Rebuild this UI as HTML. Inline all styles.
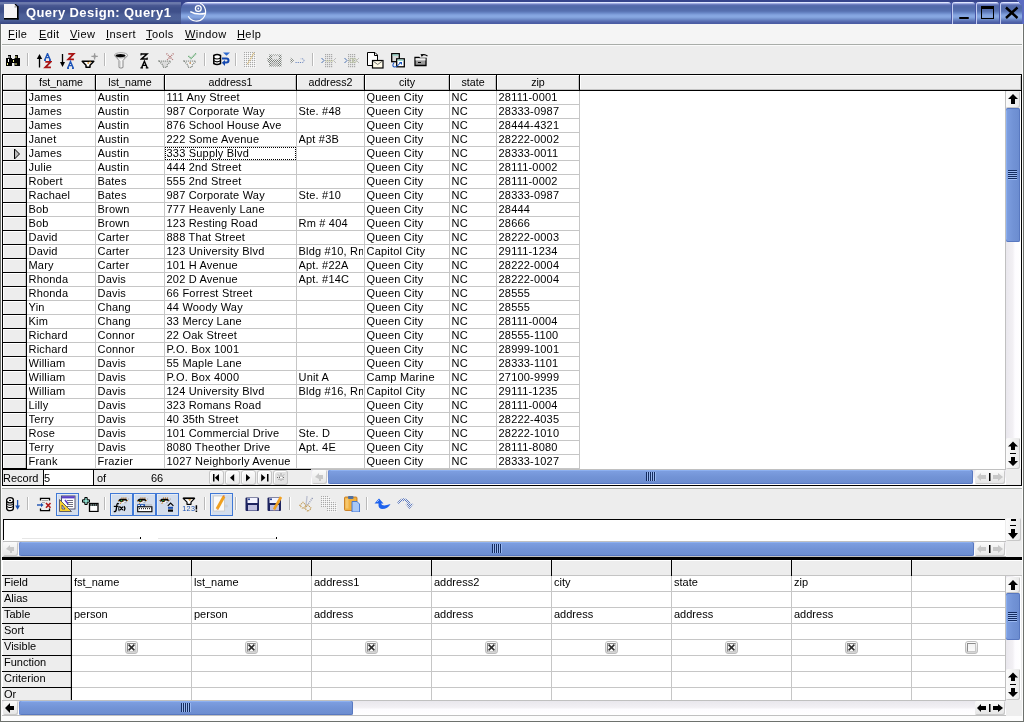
<!DOCTYPE html>
<html><head><meta charset="utf-8"><style>
html,body{margin:0;padding:0;width:1024px;height:722px;overflow:hidden;background:#ededed}
#c{position:relative;width:1024px;height:722px;overflow:hidden;will-change:transform;font-family:"Liberation Sans",sans-serif;color:#000}
#c div{position:absolute;box-sizing:border-box}
#c span{position:absolute;white-space:pre;font-family:"Liberation Sans",sans-serif;font-size:11px;line-height:13px}
u{text-decoration:underline;text-underline-offset:1px}
</style></head><body><div id="c">
<div style="left:0px;top:0px;width:1024px;height:722px;background:#ededed"></div>
<div style="left:0px;top:0px;width:1px;height:722px;background:#6d716d"></div>
<div style="left:1023px;top:0px;width:1px;height:722px;background:#6d716d"></div>
<div style="left:0px;top:721px;width:1024px;height:1px;background:#6d716d"></div>
<div style="left:1px;top:716px;width:1022px;height:5px;background:#fcfcfc"></div>
<div style="left:1px;top:24px;width:1px;height:697px;background:#fbfbfb"></div>
<div style="left:1022px;top:24px;width:1px;height:697px;background:#fbfbfb"></div>
<div style="left:0px;top:0px;width:1024px;height:24px;background:#36448c"></div>
<div style="left:0px;top:2px;width:181px;height:22px;background:linear-gradient(#6a78aa 0px,#6a78aa 2px,#4c5b94 3px,#3f508a 6px,#3f508a 10px,#4d6098 13px,#4e6299 18px,#3c4c88 21px,#34447e 22px)"></div>
<div style="left:181px;top:2px;width:770px;height:22px;border-top-left-radius:7px;border-top-right-radius:3px;background:linear-gradient(#dfe6ff 0px,#dfe6ff 1px,#a2aee3 1px,#a2aee3 2px,#6e7ebf 2px,#6e7ebf 3px,#5a6db0 3px,#5068a8 5px,#5670b0 9px,#6a88c8 11px,#84a4df 13px,#88a8e2 15px,#7290cc 17px,#5a70b4 19px,#4a5ca4 21px,#4a5ca4 22px)"></div>
<div style="left:951px;top:2px;width:1px;height:22px;background:#4656a6"></div>
<div style="left:975px;top:2px;width:1px;height:22px;background:#4656a6"></div>
<div style="left:999px;top:2px;width:1px;height:22px;background:#4656a6"></div>
<div style="left:1022px;top:0px;width:2px;height:24px;background:#5b6cc2"></div>
<div style="left:952px;top:2px;width:23px;height:22px;border-top-left-radius:3px;border-top-right-radius:3px;background:linear-gradient(#dfe6ff 0px,#dfe6ff 1px,#a2aee3 1px,#a2aee3 2px,#6e7ebf 2px,#6e7ebf 3px,#5a6db0 3px,#5068a8 5px,#5670b0 9px,#6a88c8 11px,#84a4df 13px,#88a8e2 15px,#7290cc 17px,#5a70b4 19px,#4a5ca4 21px,#4a5ca4 22px);box-shadow:inset 1px 0 0 #c4cdf2"></div>
<div style="left:976px;top:2px;width:23px;height:22px;border-top-left-radius:3px;border-top-right-radius:3px;background:linear-gradient(#dfe6ff 0px,#dfe6ff 1px,#a2aee3 1px,#a2aee3 2px,#6e7ebf 2px,#6e7ebf 3px,#5a6db0 3px,#5068a8 5px,#5670b0 9px,#6a88c8 11px,#84a4df 13px,#88a8e2 15px,#7290cc 17px,#5a70b4 19px,#4a5ca4 21px,#4a5ca4 22px);box-shadow:inset 1px 0 0 #c4cdf2"></div>
<div style="left:1000px;top:2px;width:22px;height:22px;border-top-left-radius:3px;border-top-right-radius:3px;background:linear-gradient(#dfe6ff 0px,#dfe6ff 1px,#a2aee3 1px,#a2aee3 2px,#6e7ebf 2px,#6e7ebf 3px,#5a6db0 3px,#5068a8 5px,#5670b0 9px,#6a88c8 11px,#84a4df 13px,#88a8e2 15px,#7290cc 17px,#5a70b4 19px,#4a5ca4 21px,#4a5ca4 22px);box-shadow:inset 1px 0 0 #c4cdf2"></div>
<div style="left:1017px;top:0px;width:7px;height:7px;background:linear-gradient(45deg,transparent 50%,#5b6cc2 50%)"></div>
<div style="left:959px;top:17px;width:10px;height:2px;background:#000;border-radius:1px"></div>
<div style="left:981px;top:6px;width:13px;height:13px;border:1px solid #000;border-top:3px solid #000"></div>
<svg style="position:absolute;left:1003px;top:5px;" width="18" height="15" viewBox="0 0 18 15"><path d="M3 2.5 L14.5 13 M14.5 2.5 L3 13" stroke="#000" stroke-width="2.4"/></svg>
<svg style="position:absolute;left:4px;top:4px;" width="16" height="16" viewBox="0 0 16 16"><path d="M0 0 H11 L13 2 V14 H0 Z" fill="#f6f4f6"/><path d="M11 0 L13.6 2.6" stroke="#000" stroke-width="1.3"/><rect x="13" y="2" width="1.6" height="13.6" fill="#000"/><rect x="0" y="14" width="14.6" height="1.6" fill="#000"/><rect x="10.5" y="2.4" width="2.2" height="1" fill="#7a7a7a"/></svg>
<span style="left:26px;top:5px;font-weight:bold;font-size:13px;letter-spacing:0.4px;color:#fff;line-height:16px">Query Design: Query1</span>
<svg style="position:absolute;left:182px;top:0px;" width="32" height="24" viewBox="0 0 32 24"><circle cx="16.3" cy="8.5" r="2.9" fill="none" stroke="#fff" stroke-width="1.3"/><circle cx="16.3" cy="8.5" r="0.9" fill="#fff"/><path d="M8.3 11.6 Q15 15.5 24 13.2" fill="none" stroke="#fff" stroke-width="1.5"/><path d="M18.2 3.3 A9.3 9.3 0 1 1 6.2 16.3" fill="none" stroke="#fff" stroke-width="1.2"/></svg>
<div style="left:1px;top:24px;width:1022px;height:20px;background:#f5f5f5"></div>
<div style="left:1px;top:24px;width:1px;height:20px;background:#fbfbfb"></div>
<div style="left:2px;top:44px;width:1021px;height:1px;background:#a9ada9"></div>
<div style="left:2px;top:45px;width:1021px;height:1px;background:#fbfbfb"></div>
<span style="left:8px;top:27px;font-size:11px;line-height:15px;letter-spacing:0.4px;color:#000"><u>F</u>ile</span>
<span style="left:39px;top:27px;font-size:11px;line-height:15px;letter-spacing:0.4px;color:#000"><u>E</u>dit</span>
<span style="left:70px;top:27px;font-size:11px;line-height:15px;letter-spacing:0.4px;color:#000"><u>V</u>iew</span>
<span style="left:106px;top:27px;font-size:11px;line-height:15px;letter-spacing:0.4px;color:#000"><u>I</u>nsert</span>
<span style="left:146px;top:27px;font-size:11px;line-height:15px;letter-spacing:0.4px;color:#000"><u>T</u>ools</span>
<span style="left:185px;top:27px;font-size:11px;line-height:15px;letter-spacing:0.4px;color:#000"><u>W</u>indow</span>
<span style="left:237px;top:27px;font-size:11px;line-height:15px;letter-spacing:0.4px;color:#000"><u>H</u>elp</span>
<div style="left:27px;top:53px;width:1px;height:13px;background:#b9b9b9"></div>
<div style="left:104px;top:53px;width:1px;height:13px;background:#b9b9b9"></div>
<div style="left:204px;top:53px;width:1px;height:13px;background:#b9b9b9"></div>
<div style="left:235px;top:53px;width:1px;height:13px;background:#b9b9b9"></div>
<div style="left:312px;top:53px;width:1px;height:13px;background:#b9b9b9"></div>
<div style="left:2px;top:74px;width:1020px;height:412px;background:#fff"></div>
<div style="left:2px;top:74px;width:1020px;height:17px;background:#ededed"></div>
<div style="left:2px;top:74px;width:1020px;height:1px;background:#000"></div>
<div style="left:2px;top:90px;width:1020px;height:1px;background:#000"></div>
<div style="left:2px;top:74px;width:1px;height:17px;background:#000"></div>
<div style="left:3px;top:75px;width:23px;height:1px;background:#fff"></div>
<div style="left:3px;top:75px;width:1px;height:14px;background:#fff"></div>
<div style="left:3px;top:89px;width:23px;height:1px;background:#c4c4c4"></div>
<div style="left:25px;top:76px;width:1px;height:14px;background:#c4c4c4"></div>
<div style="left:26px;top:74px;width:1px;height:17px;background:#000"></div>
<div style="left:27px;top:75px;width:68px;height:1px;background:#fff"></div>
<div style="left:27px;top:75px;width:1px;height:14px;background:#fff"></div>
<div style="left:27px;top:89px;width:68px;height:1px;background:#c4c4c4"></div>
<div style="left:94px;top:76px;width:1px;height:14px;background:#c4c4c4"></div>
<div style="left:95px;top:74px;width:1px;height:17px;background:#000"></div>
<div style="left:96px;top:75px;width:68px;height:1px;background:#fff"></div>
<div style="left:96px;top:75px;width:1px;height:14px;background:#fff"></div>
<div style="left:96px;top:89px;width:68px;height:1px;background:#c4c4c4"></div>
<div style="left:163px;top:76px;width:1px;height:14px;background:#c4c4c4"></div>
<div style="left:164px;top:74px;width:1px;height:17px;background:#000"></div>
<div style="left:165px;top:75px;width:131px;height:1px;background:#fff"></div>
<div style="left:165px;top:75px;width:1px;height:14px;background:#fff"></div>
<div style="left:165px;top:89px;width:131px;height:1px;background:#c4c4c4"></div>
<div style="left:295px;top:76px;width:1px;height:14px;background:#c4c4c4"></div>
<div style="left:296px;top:74px;width:1px;height:17px;background:#000"></div>
<div style="left:297px;top:75px;width:67px;height:1px;background:#fff"></div>
<div style="left:297px;top:75px;width:1px;height:14px;background:#fff"></div>
<div style="left:297px;top:89px;width:67px;height:1px;background:#c4c4c4"></div>
<div style="left:363px;top:76px;width:1px;height:14px;background:#c4c4c4"></div>
<div style="left:364px;top:74px;width:1px;height:17px;background:#000"></div>
<div style="left:365px;top:75px;width:84px;height:1px;background:#fff"></div>
<div style="left:365px;top:75px;width:1px;height:14px;background:#fff"></div>
<div style="left:365px;top:89px;width:84px;height:1px;background:#c4c4c4"></div>
<div style="left:448px;top:76px;width:1px;height:14px;background:#c4c4c4"></div>
<div style="left:449px;top:74px;width:1px;height:17px;background:#000"></div>
<div style="left:450px;top:75px;width:46px;height:1px;background:#fff"></div>
<div style="left:450px;top:75px;width:1px;height:14px;background:#fff"></div>
<div style="left:450px;top:89px;width:46px;height:1px;background:#c4c4c4"></div>
<div style="left:495px;top:76px;width:1px;height:14px;background:#c4c4c4"></div>
<div style="left:496px;top:74px;width:1px;height:17px;background:#000"></div>
<div style="left:497px;top:75px;width:82px;height:1px;background:#fff"></div>
<div style="left:497px;top:75px;width:1px;height:14px;background:#fff"></div>
<div style="left:497px;top:89px;width:82px;height:1px;background:#c4c4c4"></div>
<div style="left:578px;top:76px;width:1px;height:14px;background:#c4c4c4"></div>
<div style="left:579px;top:74px;width:1px;height:17px;background:#000"></div>
<div style="left:580px;top:75px;width:441px;height:1px;background:#fff"></div>
<div style="left:580px;top:75px;width:1px;height:14px;background:#fff"></div>
<div style="left:580px;top:89px;width:441px;height:1px;background:#c4c4c4"></div>
<div style="left:1020px;top:76px;width:1px;height:14px;background:#c4c4c4"></div>
<div style="left:1021px;top:74px;width:1px;height:412px;background:#000"></div>
<div style="left:2px;top:74px;width:1px;height:412px;background:#000"></div>
<span style="left:27px;top:76px;width:68px;text-align:center;font-size:10.7px;line-height:13px">fst_name</span>
<span style="left:96px;top:76px;width:68px;text-align:center;font-size:10.7px;line-height:13px">lst_name</span>
<span style="left:165px;top:76px;width:131px;text-align:center;font-size:10.7px;line-height:13px">address1</span>
<span style="left:297px;top:76px;width:67px;text-align:center;font-size:10.7px;line-height:13px">address2</span>
<span style="left:365px;top:76px;width:84px;text-align:center;font-size:10.7px;line-height:13px">city</span>
<span style="left:450px;top:76px;width:46px;text-align:center;font-size:10.7px;line-height:13px">state</span>
<span style="left:497px;top:76px;width:82px;text-align:center;font-size:10.7px;line-height:13px">zip</span>
<div style="left:95px;top:91px;width:1px;height:378px;background:#c6c6c6"></div>
<div style="left:164px;top:91px;width:1px;height:378px;background:#c6c6c6"></div>
<div style="left:296px;top:91px;width:1px;height:378px;background:#c6c6c6"></div>
<div style="left:364px;top:91px;width:1px;height:378px;background:#c6c6c6"></div>
<div style="left:449px;top:91px;width:1px;height:378px;background:#c6c6c6"></div>
<div style="left:496px;top:91px;width:1px;height:378px;background:#c6c6c6"></div>
<div style="left:579px;top:91px;width:1px;height:378px;background:#c6c6c6"></div>
<div style="left:27px;top:104px;width:552px;height:1px;background:#c6c6c6"></div>
<div style="left:3px;top:91px;width:23px;height:13px;background:#ededed;border-top:1px solid #fff;border-left:1px solid #fff;border-right:1px solid #c4c4c4"></div>
<div style="left:2px;top:104px;width:25px;height:1px;background:#000"></div>
<span style="left:28.5px;top:91px;width:65.5px;overflow:hidden;font-size:11px;line-height:13px;letter-spacing:0.2px">James</span>
<span style="left:97.5px;top:91px;width:65.5px;overflow:hidden;font-size:11px;line-height:13px;letter-spacing:0.2px">Austin</span>
<span style="left:166.5px;top:91px;width:128.5px;overflow:hidden;font-size:11px;line-height:13px;letter-spacing:0.2px">111 Any Street</span>
<span style="left:366.5px;top:91px;width:81.5px;overflow:hidden;font-size:11px;line-height:13px;letter-spacing:0.2px">Queen City</span>
<span style="left:451.5px;top:91px;width:43.5px;overflow:hidden;font-size:11px;line-height:13px;letter-spacing:0.2px">NC</span>
<span style="left:498.5px;top:91px;width:79.5px;overflow:hidden;font-size:11px;line-height:13px;letter-spacing:0.2px">28111-0001</span>
<div style="left:27px;top:118px;width:552px;height:1px;background:#c6c6c6"></div>
<div style="left:3px;top:105px;width:23px;height:13px;background:#ededed;border-top:1px solid #fff;border-left:1px solid #fff;border-right:1px solid #c4c4c4"></div>
<div style="left:2px;top:118px;width:25px;height:1px;background:#000"></div>
<span style="left:28.5px;top:105px;width:65.5px;overflow:hidden;font-size:11px;line-height:13px;letter-spacing:0.2px">James</span>
<span style="left:97.5px;top:105px;width:65.5px;overflow:hidden;font-size:11px;line-height:13px;letter-spacing:0.2px">Austin</span>
<span style="left:166.5px;top:105px;width:128.5px;overflow:hidden;font-size:11px;line-height:13px;letter-spacing:0.2px">987 Corporate Way</span>
<span style="left:298.5px;top:105px;width:64.5px;overflow:hidden;font-size:11px;line-height:13px;letter-spacing:0.2px">Ste. #48</span>
<span style="left:366.5px;top:105px;width:81.5px;overflow:hidden;font-size:11px;line-height:13px;letter-spacing:0.2px">Queen City</span>
<span style="left:451.5px;top:105px;width:43.5px;overflow:hidden;font-size:11px;line-height:13px;letter-spacing:0.2px">NC</span>
<span style="left:498.5px;top:105px;width:79.5px;overflow:hidden;font-size:11px;line-height:13px;letter-spacing:0.2px">28333-0987</span>
<div style="left:27px;top:132px;width:552px;height:1px;background:#c6c6c6"></div>
<div style="left:3px;top:119px;width:23px;height:13px;background:#ededed;border-top:1px solid #fff;border-left:1px solid #fff;border-right:1px solid #c4c4c4"></div>
<div style="left:2px;top:132px;width:25px;height:1px;background:#000"></div>
<span style="left:28.5px;top:119px;width:65.5px;overflow:hidden;font-size:11px;line-height:13px;letter-spacing:0.2px">James</span>
<span style="left:97.5px;top:119px;width:65.5px;overflow:hidden;font-size:11px;line-height:13px;letter-spacing:0.2px">Austin</span>
<span style="left:166.5px;top:119px;width:128.5px;overflow:hidden;font-size:11px;line-height:13px;letter-spacing:0.2px">876 School House Ave</span>
<span style="left:366.5px;top:119px;width:81.5px;overflow:hidden;font-size:11px;line-height:13px;letter-spacing:0.2px">Queen City</span>
<span style="left:451.5px;top:119px;width:43.5px;overflow:hidden;font-size:11px;line-height:13px;letter-spacing:0.2px">NC</span>
<span style="left:498.5px;top:119px;width:79.5px;overflow:hidden;font-size:11px;line-height:13px;letter-spacing:0.2px">28444-4321</span>
<div style="left:27px;top:146px;width:552px;height:1px;background:#c6c6c6"></div>
<div style="left:3px;top:133px;width:23px;height:13px;background:#ededed;border-top:1px solid #fff;border-left:1px solid #fff;border-right:1px solid #c4c4c4"></div>
<div style="left:2px;top:146px;width:25px;height:1px;background:#000"></div>
<span style="left:28.5px;top:133px;width:65.5px;overflow:hidden;font-size:11px;line-height:13px;letter-spacing:0.2px">Janet</span>
<span style="left:97.5px;top:133px;width:65.5px;overflow:hidden;font-size:11px;line-height:13px;letter-spacing:0.2px">Austin</span>
<span style="left:166.5px;top:133px;width:128.5px;overflow:hidden;font-size:11px;line-height:13px;letter-spacing:0.2px">222 Some Avenue</span>
<span style="left:298.5px;top:133px;width:64.5px;overflow:hidden;font-size:11px;line-height:13px;letter-spacing:0.2px">Apt #3B</span>
<span style="left:366.5px;top:133px;width:81.5px;overflow:hidden;font-size:11px;line-height:13px;letter-spacing:0.2px">Queen City</span>
<span style="left:451.5px;top:133px;width:43.5px;overflow:hidden;font-size:11px;line-height:13px;letter-spacing:0.2px">NC</span>
<span style="left:498.5px;top:133px;width:79.5px;overflow:hidden;font-size:11px;line-height:13px;letter-spacing:0.2px">28222-0002</span>
<div style="left:27px;top:160px;width:552px;height:1px;background:#c6c6c6"></div>
<div style="left:3px;top:147px;width:23px;height:13px;background:#ededed;border-top:1px solid #fff;border-left:1px solid #fff;border-right:1px solid #c4c4c4"></div>
<div style="left:2px;top:160px;width:25px;height:1px;background:#000"></div>
<span style="left:28.5px;top:147px;width:65.5px;overflow:hidden;font-size:11px;line-height:13px;letter-spacing:0.2px">James</span>
<span style="left:97.5px;top:147px;width:65.5px;overflow:hidden;font-size:11px;line-height:13px;letter-spacing:0.2px">Austin</span>
<span style="left:166.5px;top:147px;width:128.5px;overflow:hidden;font-size:11px;line-height:13px;letter-spacing:0.2px">333 Supply Blvd</span>
<span style="left:366.5px;top:147px;width:81.5px;overflow:hidden;font-size:11px;line-height:13px;letter-spacing:0.2px">Queen City</span>
<span style="left:451.5px;top:147px;width:43.5px;overflow:hidden;font-size:11px;line-height:13px;letter-spacing:0.2px">NC</span>
<span style="left:498.5px;top:147px;width:79.5px;overflow:hidden;font-size:11px;line-height:13px;letter-spacing:0.2px">28333-0011</span>
<div style="left:27px;top:174px;width:552px;height:1px;background:#c6c6c6"></div>
<div style="left:3px;top:161px;width:23px;height:13px;background:#ededed;border-top:1px solid #fff;border-left:1px solid #fff;border-right:1px solid #c4c4c4"></div>
<div style="left:2px;top:174px;width:25px;height:1px;background:#000"></div>
<span style="left:28.5px;top:161px;width:65.5px;overflow:hidden;font-size:11px;line-height:13px;letter-spacing:0.2px">Julie</span>
<span style="left:97.5px;top:161px;width:65.5px;overflow:hidden;font-size:11px;line-height:13px;letter-spacing:0.2px">Austin</span>
<span style="left:166.5px;top:161px;width:128.5px;overflow:hidden;font-size:11px;line-height:13px;letter-spacing:0.2px">444 2nd Street</span>
<span style="left:366.5px;top:161px;width:81.5px;overflow:hidden;font-size:11px;line-height:13px;letter-spacing:0.2px">Queen City</span>
<span style="left:451.5px;top:161px;width:43.5px;overflow:hidden;font-size:11px;line-height:13px;letter-spacing:0.2px">NC</span>
<span style="left:498.5px;top:161px;width:79.5px;overflow:hidden;font-size:11px;line-height:13px;letter-spacing:0.2px">28111-0002</span>
<div style="left:27px;top:188px;width:552px;height:1px;background:#c6c6c6"></div>
<div style="left:3px;top:175px;width:23px;height:13px;background:#ededed;border-top:1px solid #fff;border-left:1px solid #fff;border-right:1px solid #c4c4c4"></div>
<div style="left:2px;top:188px;width:25px;height:1px;background:#000"></div>
<span style="left:28.5px;top:175px;width:65.5px;overflow:hidden;font-size:11px;line-height:13px;letter-spacing:0.2px">Robert</span>
<span style="left:97.5px;top:175px;width:65.5px;overflow:hidden;font-size:11px;line-height:13px;letter-spacing:0.2px">Bates</span>
<span style="left:166.5px;top:175px;width:128.5px;overflow:hidden;font-size:11px;line-height:13px;letter-spacing:0.2px">555 2nd Street</span>
<span style="left:366.5px;top:175px;width:81.5px;overflow:hidden;font-size:11px;line-height:13px;letter-spacing:0.2px">Queen City</span>
<span style="left:451.5px;top:175px;width:43.5px;overflow:hidden;font-size:11px;line-height:13px;letter-spacing:0.2px">NC</span>
<span style="left:498.5px;top:175px;width:79.5px;overflow:hidden;font-size:11px;line-height:13px;letter-spacing:0.2px">28111-0002</span>
<div style="left:27px;top:202px;width:552px;height:1px;background:#c6c6c6"></div>
<div style="left:3px;top:189px;width:23px;height:13px;background:#ededed;border-top:1px solid #fff;border-left:1px solid #fff;border-right:1px solid #c4c4c4"></div>
<div style="left:2px;top:202px;width:25px;height:1px;background:#000"></div>
<span style="left:28.5px;top:189px;width:65.5px;overflow:hidden;font-size:11px;line-height:13px;letter-spacing:0.2px">Rachael</span>
<span style="left:97.5px;top:189px;width:65.5px;overflow:hidden;font-size:11px;line-height:13px;letter-spacing:0.2px">Bates</span>
<span style="left:166.5px;top:189px;width:128.5px;overflow:hidden;font-size:11px;line-height:13px;letter-spacing:0.2px">987 Corporate Way</span>
<span style="left:298.5px;top:189px;width:64.5px;overflow:hidden;font-size:11px;line-height:13px;letter-spacing:0.2px">Ste. #10</span>
<span style="left:366.5px;top:189px;width:81.5px;overflow:hidden;font-size:11px;line-height:13px;letter-spacing:0.2px">Queen City</span>
<span style="left:451.5px;top:189px;width:43.5px;overflow:hidden;font-size:11px;line-height:13px;letter-spacing:0.2px">NC</span>
<span style="left:498.5px;top:189px;width:79.5px;overflow:hidden;font-size:11px;line-height:13px;letter-spacing:0.2px">28333-0987</span>
<div style="left:27px;top:216px;width:552px;height:1px;background:#c6c6c6"></div>
<div style="left:3px;top:203px;width:23px;height:13px;background:#ededed;border-top:1px solid #fff;border-left:1px solid #fff;border-right:1px solid #c4c4c4"></div>
<div style="left:2px;top:216px;width:25px;height:1px;background:#000"></div>
<span style="left:28.5px;top:203px;width:65.5px;overflow:hidden;font-size:11px;line-height:13px;letter-spacing:0.2px">Bob</span>
<span style="left:97.5px;top:203px;width:65.5px;overflow:hidden;font-size:11px;line-height:13px;letter-spacing:0.2px">Brown</span>
<span style="left:166.5px;top:203px;width:128.5px;overflow:hidden;font-size:11px;line-height:13px;letter-spacing:0.2px">777 Heavenly Lane</span>
<span style="left:366.5px;top:203px;width:81.5px;overflow:hidden;font-size:11px;line-height:13px;letter-spacing:0.2px">Queen City</span>
<span style="left:451.5px;top:203px;width:43.5px;overflow:hidden;font-size:11px;line-height:13px;letter-spacing:0.2px">NC</span>
<span style="left:498.5px;top:203px;width:79.5px;overflow:hidden;font-size:11px;line-height:13px;letter-spacing:0.2px">28444</span>
<div style="left:27px;top:230px;width:552px;height:1px;background:#c6c6c6"></div>
<div style="left:3px;top:217px;width:23px;height:13px;background:#ededed;border-top:1px solid #fff;border-left:1px solid #fff;border-right:1px solid #c4c4c4"></div>
<div style="left:2px;top:230px;width:25px;height:1px;background:#000"></div>
<span style="left:28.5px;top:217px;width:65.5px;overflow:hidden;font-size:11px;line-height:13px;letter-spacing:0.2px">Bob</span>
<span style="left:97.5px;top:217px;width:65.5px;overflow:hidden;font-size:11px;line-height:13px;letter-spacing:0.2px">Brown</span>
<span style="left:166.5px;top:217px;width:128.5px;overflow:hidden;font-size:11px;line-height:13px;letter-spacing:0.2px">123 Resting Road</span>
<span style="left:298.5px;top:217px;width:64.5px;overflow:hidden;font-size:11px;line-height:13px;letter-spacing:0.2px">Rm # 404</span>
<span style="left:366.5px;top:217px;width:81.5px;overflow:hidden;font-size:11px;line-height:13px;letter-spacing:0.2px">Queen City</span>
<span style="left:451.5px;top:217px;width:43.5px;overflow:hidden;font-size:11px;line-height:13px;letter-spacing:0.2px">NC</span>
<span style="left:498.5px;top:217px;width:79.5px;overflow:hidden;font-size:11px;line-height:13px;letter-spacing:0.2px">28666</span>
<div style="left:27px;top:244px;width:552px;height:1px;background:#c6c6c6"></div>
<div style="left:3px;top:231px;width:23px;height:13px;background:#ededed;border-top:1px solid #fff;border-left:1px solid #fff;border-right:1px solid #c4c4c4"></div>
<div style="left:2px;top:244px;width:25px;height:1px;background:#000"></div>
<span style="left:28.5px;top:231px;width:65.5px;overflow:hidden;font-size:11px;line-height:13px;letter-spacing:0.2px">David</span>
<span style="left:97.5px;top:231px;width:65.5px;overflow:hidden;font-size:11px;line-height:13px;letter-spacing:0.2px">Carter</span>
<span style="left:166.5px;top:231px;width:128.5px;overflow:hidden;font-size:11px;line-height:13px;letter-spacing:0.2px">888 That Street</span>
<span style="left:366.5px;top:231px;width:81.5px;overflow:hidden;font-size:11px;line-height:13px;letter-spacing:0.2px">Queen City</span>
<span style="left:451.5px;top:231px;width:43.5px;overflow:hidden;font-size:11px;line-height:13px;letter-spacing:0.2px">NC</span>
<span style="left:498.5px;top:231px;width:79.5px;overflow:hidden;font-size:11px;line-height:13px;letter-spacing:0.2px">28222-0003</span>
<div style="left:27px;top:258px;width:552px;height:1px;background:#c6c6c6"></div>
<div style="left:3px;top:245px;width:23px;height:13px;background:#ededed;border-top:1px solid #fff;border-left:1px solid #fff;border-right:1px solid #c4c4c4"></div>
<div style="left:2px;top:258px;width:25px;height:1px;background:#000"></div>
<span style="left:28.5px;top:245px;width:65.5px;overflow:hidden;font-size:11px;line-height:13px;letter-spacing:0.2px">David</span>
<span style="left:97.5px;top:245px;width:65.5px;overflow:hidden;font-size:11px;line-height:13px;letter-spacing:0.2px">Carter</span>
<span style="left:166.5px;top:245px;width:128.5px;overflow:hidden;font-size:11px;line-height:13px;letter-spacing:0.2px">123 University Blvd</span>
<span style="left:298.5px;top:245px;width:64.5px;overflow:hidden;font-size:11px;line-height:13px;letter-spacing:0.2px">Bldg #10, Rm 2</span>
<span style="left:366.5px;top:245px;width:81.5px;overflow:hidden;font-size:11px;line-height:13px;letter-spacing:0.2px">Capitol City</span>
<span style="left:451.5px;top:245px;width:43.5px;overflow:hidden;font-size:11px;line-height:13px;letter-spacing:0.2px">NC</span>
<span style="left:498.5px;top:245px;width:79.5px;overflow:hidden;font-size:11px;line-height:13px;letter-spacing:0.2px">29111-1234</span>
<div style="left:27px;top:272px;width:552px;height:1px;background:#c6c6c6"></div>
<div style="left:3px;top:259px;width:23px;height:13px;background:#ededed;border-top:1px solid #fff;border-left:1px solid #fff;border-right:1px solid #c4c4c4"></div>
<div style="left:2px;top:272px;width:25px;height:1px;background:#000"></div>
<span style="left:28.5px;top:259px;width:65.5px;overflow:hidden;font-size:11px;line-height:13px;letter-spacing:0.2px">Mary</span>
<span style="left:97.5px;top:259px;width:65.5px;overflow:hidden;font-size:11px;line-height:13px;letter-spacing:0.2px">Carter</span>
<span style="left:166.5px;top:259px;width:128.5px;overflow:hidden;font-size:11px;line-height:13px;letter-spacing:0.2px">101 H Avenue</span>
<span style="left:298.5px;top:259px;width:64.5px;overflow:hidden;font-size:11px;line-height:13px;letter-spacing:0.2px">Apt. #22A</span>
<span style="left:366.5px;top:259px;width:81.5px;overflow:hidden;font-size:11px;line-height:13px;letter-spacing:0.2px">Queen City</span>
<span style="left:451.5px;top:259px;width:43.5px;overflow:hidden;font-size:11px;line-height:13px;letter-spacing:0.2px">NC</span>
<span style="left:498.5px;top:259px;width:79.5px;overflow:hidden;font-size:11px;line-height:13px;letter-spacing:0.2px">28222-0004</span>
<div style="left:27px;top:286px;width:552px;height:1px;background:#c6c6c6"></div>
<div style="left:3px;top:273px;width:23px;height:13px;background:#ededed;border-top:1px solid #fff;border-left:1px solid #fff;border-right:1px solid #c4c4c4"></div>
<div style="left:2px;top:286px;width:25px;height:1px;background:#000"></div>
<span style="left:28.5px;top:273px;width:65.5px;overflow:hidden;font-size:11px;line-height:13px;letter-spacing:0.2px">Rhonda</span>
<span style="left:97.5px;top:273px;width:65.5px;overflow:hidden;font-size:11px;line-height:13px;letter-spacing:0.2px">Davis</span>
<span style="left:166.5px;top:273px;width:128.5px;overflow:hidden;font-size:11px;line-height:13px;letter-spacing:0.2px">202 D Avenue</span>
<span style="left:298.5px;top:273px;width:64.5px;overflow:hidden;font-size:11px;line-height:13px;letter-spacing:0.2px">Apt. #14C</span>
<span style="left:366.5px;top:273px;width:81.5px;overflow:hidden;font-size:11px;line-height:13px;letter-spacing:0.2px">Queen City</span>
<span style="left:451.5px;top:273px;width:43.5px;overflow:hidden;font-size:11px;line-height:13px;letter-spacing:0.2px">NC</span>
<span style="left:498.5px;top:273px;width:79.5px;overflow:hidden;font-size:11px;line-height:13px;letter-spacing:0.2px">28222-0004</span>
<div style="left:27px;top:300px;width:552px;height:1px;background:#c6c6c6"></div>
<div style="left:3px;top:287px;width:23px;height:13px;background:#ededed;border-top:1px solid #fff;border-left:1px solid #fff;border-right:1px solid #c4c4c4"></div>
<div style="left:2px;top:300px;width:25px;height:1px;background:#000"></div>
<span style="left:28.5px;top:287px;width:65.5px;overflow:hidden;font-size:11px;line-height:13px;letter-spacing:0.2px">Rhonda</span>
<span style="left:97.5px;top:287px;width:65.5px;overflow:hidden;font-size:11px;line-height:13px;letter-spacing:0.2px">Davis</span>
<span style="left:166.5px;top:287px;width:128.5px;overflow:hidden;font-size:11px;line-height:13px;letter-spacing:0.2px">66 Forrest Street</span>
<span style="left:366.5px;top:287px;width:81.5px;overflow:hidden;font-size:11px;line-height:13px;letter-spacing:0.2px">Queen City</span>
<span style="left:451.5px;top:287px;width:43.5px;overflow:hidden;font-size:11px;line-height:13px;letter-spacing:0.2px">NC</span>
<span style="left:498.5px;top:287px;width:79.5px;overflow:hidden;font-size:11px;line-height:13px;letter-spacing:0.2px">28555</span>
<div style="left:27px;top:314px;width:552px;height:1px;background:#c6c6c6"></div>
<div style="left:3px;top:301px;width:23px;height:13px;background:#ededed;border-top:1px solid #fff;border-left:1px solid #fff;border-right:1px solid #c4c4c4"></div>
<div style="left:2px;top:314px;width:25px;height:1px;background:#000"></div>
<span style="left:28.5px;top:301px;width:65.5px;overflow:hidden;font-size:11px;line-height:13px;letter-spacing:0.2px">Yin</span>
<span style="left:97.5px;top:301px;width:65.5px;overflow:hidden;font-size:11px;line-height:13px;letter-spacing:0.2px">Chang</span>
<span style="left:166.5px;top:301px;width:128.5px;overflow:hidden;font-size:11px;line-height:13px;letter-spacing:0.2px">44 Woody Way</span>
<span style="left:366.5px;top:301px;width:81.5px;overflow:hidden;font-size:11px;line-height:13px;letter-spacing:0.2px">Queen City</span>
<span style="left:451.5px;top:301px;width:43.5px;overflow:hidden;font-size:11px;line-height:13px;letter-spacing:0.2px">NC</span>
<span style="left:498.5px;top:301px;width:79.5px;overflow:hidden;font-size:11px;line-height:13px;letter-spacing:0.2px">28555</span>
<div style="left:27px;top:328px;width:552px;height:1px;background:#c6c6c6"></div>
<div style="left:3px;top:315px;width:23px;height:13px;background:#ededed;border-top:1px solid #fff;border-left:1px solid #fff;border-right:1px solid #c4c4c4"></div>
<div style="left:2px;top:328px;width:25px;height:1px;background:#000"></div>
<span style="left:28.5px;top:315px;width:65.5px;overflow:hidden;font-size:11px;line-height:13px;letter-spacing:0.2px">Kim</span>
<span style="left:97.5px;top:315px;width:65.5px;overflow:hidden;font-size:11px;line-height:13px;letter-spacing:0.2px">Chang</span>
<span style="left:166.5px;top:315px;width:128.5px;overflow:hidden;font-size:11px;line-height:13px;letter-spacing:0.2px">33 Mercy Lane</span>
<span style="left:366.5px;top:315px;width:81.5px;overflow:hidden;font-size:11px;line-height:13px;letter-spacing:0.2px">Queen City</span>
<span style="left:451.5px;top:315px;width:43.5px;overflow:hidden;font-size:11px;line-height:13px;letter-spacing:0.2px">NC</span>
<span style="left:498.5px;top:315px;width:79.5px;overflow:hidden;font-size:11px;line-height:13px;letter-spacing:0.2px">28111-0004</span>
<div style="left:27px;top:342px;width:552px;height:1px;background:#c6c6c6"></div>
<div style="left:3px;top:329px;width:23px;height:13px;background:#ededed;border-top:1px solid #fff;border-left:1px solid #fff;border-right:1px solid #c4c4c4"></div>
<div style="left:2px;top:342px;width:25px;height:1px;background:#000"></div>
<span style="left:28.5px;top:329px;width:65.5px;overflow:hidden;font-size:11px;line-height:13px;letter-spacing:0.2px">Richard</span>
<span style="left:97.5px;top:329px;width:65.5px;overflow:hidden;font-size:11px;line-height:13px;letter-spacing:0.2px">Connor</span>
<span style="left:166.5px;top:329px;width:128.5px;overflow:hidden;font-size:11px;line-height:13px;letter-spacing:0.2px">22 Oak Street</span>
<span style="left:366.5px;top:329px;width:81.5px;overflow:hidden;font-size:11px;line-height:13px;letter-spacing:0.2px">Queen City</span>
<span style="left:451.5px;top:329px;width:43.5px;overflow:hidden;font-size:11px;line-height:13px;letter-spacing:0.2px">NC</span>
<span style="left:498.5px;top:329px;width:79.5px;overflow:hidden;font-size:11px;line-height:13px;letter-spacing:0.2px">28555-1100</span>
<div style="left:27px;top:356px;width:552px;height:1px;background:#c6c6c6"></div>
<div style="left:3px;top:343px;width:23px;height:13px;background:#ededed;border-top:1px solid #fff;border-left:1px solid #fff;border-right:1px solid #c4c4c4"></div>
<div style="left:2px;top:356px;width:25px;height:1px;background:#000"></div>
<span style="left:28.5px;top:343px;width:65.5px;overflow:hidden;font-size:11px;line-height:13px;letter-spacing:0.2px">Richard</span>
<span style="left:97.5px;top:343px;width:65.5px;overflow:hidden;font-size:11px;line-height:13px;letter-spacing:0.2px">Connor</span>
<span style="left:166.5px;top:343px;width:128.5px;overflow:hidden;font-size:11px;line-height:13px;letter-spacing:0.2px">P.O. Box 1001</span>
<span style="left:366.5px;top:343px;width:81.5px;overflow:hidden;font-size:11px;line-height:13px;letter-spacing:0.2px">Queen City</span>
<span style="left:451.5px;top:343px;width:43.5px;overflow:hidden;font-size:11px;line-height:13px;letter-spacing:0.2px">NC</span>
<span style="left:498.5px;top:343px;width:79.5px;overflow:hidden;font-size:11px;line-height:13px;letter-spacing:0.2px">28999-1001</span>
<div style="left:27px;top:370px;width:552px;height:1px;background:#c6c6c6"></div>
<div style="left:3px;top:357px;width:23px;height:13px;background:#ededed;border-top:1px solid #fff;border-left:1px solid #fff;border-right:1px solid #c4c4c4"></div>
<div style="left:2px;top:370px;width:25px;height:1px;background:#000"></div>
<span style="left:28.5px;top:357px;width:65.5px;overflow:hidden;font-size:11px;line-height:13px;letter-spacing:0.2px">William</span>
<span style="left:97.5px;top:357px;width:65.5px;overflow:hidden;font-size:11px;line-height:13px;letter-spacing:0.2px">Davis</span>
<span style="left:166.5px;top:357px;width:128.5px;overflow:hidden;font-size:11px;line-height:13px;letter-spacing:0.2px">55 Maple Lane</span>
<span style="left:366.5px;top:357px;width:81.5px;overflow:hidden;font-size:11px;line-height:13px;letter-spacing:0.2px">Queen City</span>
<span style="left:451.5px;top:357px;width:43.5px;overflow:hidden;font-size:11px;line-height:13px;letter-spacing:0.2px">NC</span>
<span style="left:498.5px;top:357px;width:79.5px;overflow:hidden;font-size:11px;line-height:13px;letter-spacing:0.2px">28333-1101</span>
<div style="left:27px;top:384px;width:552px;height:1px;background:#c6c6c6"></div>
<div style="left:3px;top:371px;width:23px;height:13px;background:#ededed;border-top:1px solid #fff;border-left:1px solid #fff;border-right:1px solid #c4c4c4"></div>
<div style="left:2px;top:384px;width:25px;height:1px;background:#000"></div>
<span style="left:28.5px;top:371px;width:65.5px;overflow:hidden;font-size:11px;line-height:13px;letter-spacing:0.2px">William</span>
<span style="left:97.5px;top:371px;width:65.5px;overflow:hidden;font-size:11px;line-height:13px;letter-spacing:0.2px">Davis</span>
<span style="left:166.5px;top:371px;width:128.5px;overflow:hidden;font-size:11px;line-height:13px;letter-spacing:0.2px">P.O. Box 4000</span>
<span style="left:298.5px;top:371px;width:64.5px;overflow:hidden;font-size:11px;line-height:13px;letter-spacing:0.2px">Unit A</span>
<span style="left:366.5px;top:371px;width:81.5px;overflow:hidden;font-size:11px;line-height:13px;letter-spacing:0.2px">Camp Marine</span>
<span style="left:451.5px;top:371px;width:43.5px;overflow:hidden;font-size:11px;line-height:13px;letter-spacing:0.2px">NC</span>
<span style="left:498.5px;top:371px;width:79.5px;overflow:hidden;font-size:11px;line-height:13px;letter-spacing:0.2px">27100-9999</span>
<div style="left:27px;top:398px;width:552px;height:1px;background:#c6c6c6"></div>
<div style="left:3px;top:385px;width:23px;height:13px;background:#ededed;border-top:1px solid #fff;border-left:1px solid #fff;border-right:1px solid #c4c4c4"></div>
<div style="left:2px;top:398px;width:25px;height:1px;background:#000"></div>
<span style="left:28.5px;top:385px;width:65.5px;overflow:hidden;font-size:11px;line-height:13px;letter-spacing:0.2px">William</span>
<span style="left:97.5px;top:385px;width:65.5px;overflow:hidden;font-size:11px;line-height:13px;letter-spacing:0.2px">Davis</span>
<span style="left:166.5px;top:385px;width:128.5px;overflow:hidden;font-size:11px;line-height:13px;letter-spacing:0.2px">124 University Blvd</span>
<span style="left:298.5px;top:385px;width:64.5px;overflow:hidden;font-size:11px;line-height:13px;letter-spacing:0.2px">Bldg #16, Rm 3</span>
<span style="left:366.5px;top:385px;width:81.5px;overflow:hidden;font-size:11px;line-height:13px;letter-spacing:0.2px">Capitol City</span>
<span style="left:451.5px;top:385px;width:43.5px;overflow:hidden;font-size:11px;line-height:13px;letter-spacing:0.2px">NC</span>
<span style="left:498.5px;top:385px;width:79.5px;overflow:hidden;font-size:11px;line-height:13px;letter-spacing:0.2px">29111-1235</span>
<div style="left:27px;top:412px;width:552px;height:1px;background:#c6c6c6"></div>
<div style="left:3px;top:399px;width:23px;height:13px;background:#ededed;border-top:1px solid #fff;border-left:1px solid #fff;border-right:1px solid #c4c4c4"></div>
<div style="left:2px;top:412px;width:25px;height:1px;background:#000"></div>
<span style="left:28.5px;top:399px;width:65.5px;overflow:hidden;font-size:11px;line-height:13px;letter-spacing:0.2px">Lilly</span>
<span style="left:97.5px;top:399px;width:65.5px;overflow:hidden;font-size:11px;line-height:13px;letter-spacing:0.2px">Davis</span>
<span style="left:166.5px;top:399px;width:128.5px;overflow:hidden;font-size:11px;line-height:13px;letter-spacing:0.2px">323 Romans Road</span>
<span style="left:366.5px;top:399px;width:81.5px;overflow:hidden;font-size:11px;line-height:13px;letter-spacing:0.2px">Queen City</span>
<span style="left:451.5px;top:399px;width:43.5px;overflow:hidden;font-size:11px;line-height:13px;letter-spacing:0.2px">NC</span>
<span style="left:498.5px;top:399px;width:79.5px;overflow:hidden;font-size:11px;line-height:13px;letter-spacing:0.2px">28111-0004</span>
<div style="left:27px;top:426px;width:552px;height:1px;background:#c6c6c6"></div>
<div style="left:3px;top:413px;width:23px;height:13px;background:#ededed;border-top:1px solid #fff;border-left:1px solid #fff;border-right:1px solid #c4c4c4"></div>
<div style="left:2px;top:426px;width:25px;height:1px;background:#000"></div>
<span style="left:28.5px;top:413px;width:65.5px;overflow:hidden;font-size:11px;line-height:13px;letter-spacing:0.2px">Terry</span>
<span style="left:97.5px;top:413px;width:65.5px;overflow:hidden;font-size:11px;line-height:13px;letter-spacing:0.2px">Davis</span>
<span style="left:166.5px;top:413px;width:128.5px;overflow:hidden;font-size:11px;line-height:13px;letter-spacing:0.2px">40 35th Street</span>
<span style="left:366.5px;top:413px;width:81.5px;overflow:hidden;font-size:11px;line-height:13px;letter-spacing:0.2px">Queen City</span>
<span style="left:451.5px;top:413px;width:43.5px;overflow:hidden;font-size:11px;line-height:13px;letter-spacing:0.2px">NC</span>
<span style="left:498.5px;top:413px;width:79.5px;overflow:hidden;font-size:11px;line-height:13px;letter-spacing:0.2px">28222-4035</span>
<div style="left:27px;top:440px;width:552px;height:1px;background:#c6c6c6"></div>
<div style="left:3px;top:427px;width:23px;height:13px;background:#ededed;border-top:1px solid #fff;border-left:1px solid #fff;border-right:1px solid #c4c4c4"></div>
<div style="left:2px;top:440px;width:25px;height:1px;background:#000"></div>
<span style="left:28.5px;top:427px;width:65.5px;overflow:hidden;font-size:11px;line-height:13px;letter-spacing:0.2px">Rose</span>
<span style="left:97.5px;top:427px;width:65.5px;overflow:hidden;font-size:11px;line-height:13px;letter-spacing:0.2px">Davis</span>
<span style="left:166.5px;top:427px;width:128.5px;overflow:hidden;font-size:11px;line-height:13px;letter-spacing:0.2px">101 Commercial Drive</span>
<span style="left:298.5px;top:427px;width:64.5px;overflow:hidden;font-size:11px;line-height:13px;letter-spacing:0.2px">Ste. D</span>
<span style="left:366.5px;top:427px;width:81.5px;overflow:hidden;font-size:11px;line-height:13px;letter-spacing:0.2px">Queen City</span>
<span style="left:451.5px;top:427px;width:43.5px;overflow:hidden;font-size:11px;line-height:13px;letter-spacing:0.2px">NC</span>
<span style="left:498.5px;top:427px;width:79.5px;overflow:hidden;font-size:11px;line-height:13px;letter-spacing:0.2px">28222-1010</span>
<div style="left:27px;top:454px;width:552px;height:1px;background:#c6c6c6"></div>
<div style="left:3px;top:441px;width:23px;height:13px;background:#ededed;border-top:1px solid #fff;border-left:1px solid #fff;border-right:1px solid #c4c4c4"></div>
<div style="left:2px;top:454px;width:25px;height:1px;background:#000"></div>
<span style="left:28.5px;top:441px;width:65.5px;overflow:hidden;font-size:11px;line-height:13px;letter-spacing:0.2px">Terry</span>
<span style="left:97.5px;top:441px;width:65.5px;overflow:hidden;font-size:11px;line-height:13px;letter-spacing:0.2px">Davis</span>
<span style="left:166.5px;top:441px;width:128.5px;overflow:hidden;font-size:11px;line-height:13px;letter-spacing:0.2px">8080 Theother Drive</span>
<span style="left:298.5px;top:441px;width:64.5px;overflow:hidden;font-size:11px;line-height:13px;letter-spacing:0.2px">Apt. 4E</span>
<span style="left:366.5px;top:441px;width:81.5px;overflow:hidden;font-size:11px;line-height:13px;letter-spacing:0.2px">Queen City</span>
<span style="left:451.5px;top:441px;width:43.5px;overflow:hidden;font-size:11px;line-height:13px;letter-spacing:0.2px">NC</span>
<span style="left:498.5px;top:441px;width:79.5px;overflow:hidden;font-size:11px;line-height:13px;letter-spacing:0.2px">28111-8080</span>
<div style="left:27px;top:468px;width:552px;height:1px;background:#c6c6c6"></div>
<div style="left:3px;top:455px;width:23px;height:13px;background:#ededed;border-top:1px solid #fff;border-left:1px solid #fff;border-right:1px solid #c4c4c4"></div>
<div style="left:2px;top:468px;width:25px;height:1px;background:#000"></div>
<span style="left:28.5px;top:455px;width:65.5px;overflow:hidden;font-size:11px;line-height:13px;letter-spacing:0.2px">Frank</span>
<span style="left:97.5px;top:455px;width:65.5px;overflow:hidden;font-size:11px;line-height:13px;letter-spacing:0.2px">Frazier</span>
<span style="left:166.5px;top:455px;width:128.5px;overflow:hidden;font-size:11px;line-height:13px;letter-spacing:0.2px">1027 Neighborly Avenue</span>
<span style="left:366.5px;top:455px;width:81.5px;overflow:hidden;font-size:11px;line-height:13px;letter-spacing:0.2px">Queen City</span>
<span style="left:451.5px;top:455px;width:43.5px;overflow:hidden;font-size:11px;line-height:13px;letter-spacing:0.2px">NC</span>
<span style="left:498.5px;top:455px;width:79.5px;overflow:hidden;font-size:11px;line-height:13px;letter-spacing:0.2px">28333-1027</span>
<div style="left:26px;top:90px;width:1px;height:379px;background:#000"></div>
<svg style="position:absolute;left:13px;top:148px;" width="8" height="12" viewBox="0 0 8 12"><path d="M1.5 1 L1.5 11 L6.5 6 Z" fill="#bbb" stroke="#000" stroke-width="1"/></svg>
<div style="left:165px;top:147px;width:131px;height:13px;border:1px dotted #000"></div>
<div style="left:1005px;top:91px;width:1px;height:378px;background:#c0c0c0"></div>
<div style="left:1006px;top:91px;width:15px;height:378px;background:linear-gradient(90deg,#e9e7ed,#f2f0f4 45%,#fdfcff 60%,#fff)"></div>
<div style="left:1006px;top:91px;width:14px;height:17px;background:linear-gradient(90deg,#fbfbfb,#e8e8e8);border-radius:2px;box-shadow:inset -1px -1px 0 #c8c8c8"></div>
<svg style="position:absolute;left:1006px;top:91px;" width="14" height="17" viewBox="0 0 14 17"><path d="M7 3 L12 8 L9 8 L9 13 L5 13 L5 8 L2 8 Z" fill="#000"/></svg>
<div style="left:1006px;top:108px;width:14px;height:134px;background:linear-gradient(90deg,#8db0f0 0,#8db0f0 1px,#7d9ee0 1px,#7293d6 7px,#6c8dd0 13px,#5878c0 13px);border-radius:2px;box-shadow:inset 0 1px 0 #5878c0,inset 0 -1px 0 #5878c0"></div>
<div style="left:1008px;top:170px;width:9px;height:1px;background:#142c60"></div>
<div style="left:1008px;top:171px;width:9px;height:1px;background:#9ab8f0"></div>
<div style="left:1008px;top:172px;width:9px;height:1px;background:#142c60"></div>
<div style="left:1008px;top:173px;width:9px;height:1px;background:#9ab8f0"></div>
<div style="left:1008px;top:174px;width:9px;height:1px;background:#142c60"></div>
<div style="left:1008px;top:175px;width:9px;height:1px;background:#9ab8f0"></div>
<div style="left:1008px;top:176px;width:9px;height:1px;background:#142c60"></div>
<div style="left:1008px;top:177px;width:9px;height:1px;background:#9ab8f0"></div>
<div style="left:1008px;top:178px;width:9px;height:1px;background:#142c60"></div>
<div style="left:1008px;top:179px;width:9px;height:1px;background:#9ab8f0"></div>
<div style="left:1006px;top:438px;width:14px;height:31px;background:linear-gradient(90deg,#fbfbfb,#e8e8e8);border-radius:2px;box-shadow:inset -1px -1px 0 #c8c8c8"></div>
<svg style="position:absolute;left:1006px;top:438px;" width="14" height="31" viewBox="0 0 14 31"><path d="M7 3.5 L12 8.5 L9 8.5 L9 12 L5 12 L5 8.5 L2 8.5 Z M4 15 H10 V16 H4 Z M5 19 L9 19 L9 23 L12 23 L7 28 L2 23 L5 23 Z" fill="#000"/></svg>
<div style="left:2px;top:469px;width:309px;height:1px;background:#000"></div>
<div style="left:3px;top:470px;width:308px;height:15px;background:#ededed"></div>
<div style="left:2px;top:485px;width:1020px;height:1px;background:#000"></div>
<div style="left:43px;top:470px;width:1px;height:15px;background:#000"></div>
<div style="left:44px;top:470px;width:49px;height:15px;background:#fff"></div>
<div style="left:93px;top:470px;width:1px;height:15px;background:#000"></div>
<span style="left:3px;top:471px;font-size:11px;line-height:14px">Record</span>
<span style="left:44px;top:471px;font-size:11px;line-height:14px">5</span>
<span style="left:97px;top:471px;font-size:11px;line-height:14px">of</span>
<span style="left:151px;top:471px;font-size:11px;line-height:14px">66</span>
<div style="left:209px;top:470px;width:15px;height:15px;background:linear-gradient(#fdfdfd,#e8e8e8);border-radius:3px;box-shadow:inset 0 0 0 1px #c4c4c4, inset 2px 2px 0 #fff"></div>
<div style="left:225px;top:470px;width:15px;height:15px;background:linear-gradient(#fdfdfd,#e8e8e8);border-radius:3px;box-shadow:inset 0 0 0 1px #c4c4c4, inset 2px 2px 0 #fff"></div>
<div style="left:241px;top:470px;width:15px;height:15px;background:linear-gradient(#fdfdfd,#e8e8e8);border-radius:3px;box-shadow:inset 0 0 0 1px #c4c4c4, inset 2px 2px 0 #fff"></div>
<div style="left:257px;top:470px;width:15px;height:15px;background:linear-gradient(#fdfdfd,#e8e8e8);border-radius:3px;box-shadow:inset 0 0 0 1px #c4c4c4, inset 2px 2px 0 #fff"></div>
<div style="left:273px;top:470px;width:15px;height:15px;background:linear-gradient(#fdfdfd,#e8e8e8);border-radius:3px;box-shadow:inset 0 0 0 1px #c4c4c4, inset 2px 2px 0 #fff;background:#e2e2e2"></div>
<svg style="position:absolute;left:209px;top:470px;" width="80" height="15" viewBox="0 0 80 15"><rect x="4" y="4" width="1.5" height="7.5" fill="#000"/><path d="M5.8 7.7 L10 3.9 V11.5 Z" fill="#000"/><path d="M21 7.7 L25.2 3.9 V11.5 Z" fill="#000"/><path d="M37 3.9 V11.5 L41.2 7.7 Z" fill="#000"/><path d="M52.2 3.9 V11.5 L56.4 7.7 Z" fill="#000"/><rect x="58" y="4" width="1.5" height="7.5" fill="#000"/><path d="M72 3.5 V11.5 M68 7.5 H76 M69.2 4.7 L74.8 10.3 M74.8 4.7 L69.2 10.3" stroke="#6a6a6a" stroke-width="1" stroke-dasharray="1 1"/><rect x="71" y="6.5" width="2" height="2" fill="#fff"/></svg>
<div style="left:311px;top:469px;width:695px;height:1px;background:#c0c0c0"></div>
<div style="left:311px;top:470px;width:695px;height:15px;background:linear-gradient(#e9e7ed,#f2f0f4 45%,#fdfcff 60%,#fff)"></div>
<div style="left:312px;top:470px;width:15px;height:14px;background:linear-gradient(#fbfbfb,#e4e4e4);border-radius:2px;box-shadow:inset -1px -1px 0 #c8c8c8"></div>
<svg style="position:absolute;left:312px;top:470px;" width="15" height="14" viewBox="0 0 15 14"><path d="M3 7 L7 3 V5 H11 V9 L9 9 V11 H7 L7 9 Z" fill="#c8c8c8"/></svg>
<div style="left:328px;top:470px;width:645px;height:14px;background:linear-gradient(#8db0f0 0,#8db0f0 1px,#7d9ee0 1px,#7293d6 7px,#6c8dd0 13px,#5878c0 13px);border-radius:2px;box-shadow:inset 1px 0 0 #6a8ad0,inset -1px 0 0 #5878c0"></div>
<div style="left:646px;top:472px;width:1px;height:9px;background:#142c60"></div>
<div style="left:647px;top:472px;width:1px;height:9px;background:#9ab8f0"></div>
<div style="left:648px;top:472px;width:1px;height:9px;background:#142c60"></div>
<div style="left:649px;top:472px;width:1px;height:9px;background:#9ab8f0"></div>
<div style="left:650px;top:472px;width:1px;height:9px;background:#142c60"></div>
<div style="left:651px;top:472px;width:1px;height:9px;background:#9ab8f0"></div>
<div style="left:652px;top:472px;width:1px;height:9px;background:#142c60"></div>
<div style="left:653px;top:472px;width:1px;height:9px;background:#9ab8f0"></div>
<div style="left:654px;top:472px;width:1px;height:9px;background:#142c60"></div>
<div style="left:655px;top:472px;width:1px;height:9px;background:#9ab8f0"></div>
<div style="left:975px;top:470px;width:30px;height:14px;background:linear-gradient(#fbfbfb,#e4e4e4);border-radius:2px;box-shadow:inset -1px -1px 0 #c8c8c8"></div>
<svg style="position:absolute;left:975px;top:470px;" width="30" height="14" viewBox="0 0 30 14"><path d="M2 7 L6 3 V5 H11 V9 H6 V11 Z M23 3 L28 7 L23 11 V9 H18 V5 H23 Z" fill="#c8c8c8"/><rect x="14" y="3" width="1.5" height="8" fill="#000"/></svg>
<div style="left:1006px;top:469px;width:15px;height:16px;background:#ededed"></div>
<div style="left:2px;top:486px;width:1020px;height:2px;background:#fbfbfb"></div>
<div style="left:2px;top:488px;width:1020px;height:1px;background:#aaaeaa"></div>
<div style="left:27px;top:497px;width:1px;height:13px;background:#b9b9b9"></div>
<div style="left:104px;top:497px;width:1px;height:13px;background:#b9b9b9"></div>
<div style="left:204px;top:497px;width:1px;height:13px;background:#b9b9b9"></div>
<div style="left:235px;top:497px;width:1px;height:13px;background:#b9b9b9"></div>
<div style="left:289px;top:497px;width:1px;height:13px;background:#b9b9b9"></div>
<div style="left:366px;top:497px;width:1px;height:13px;background:#b9b9b9"></div>
<div style="left:3px;top:519px;width:1002px;height:22px;background:#fff"></div>
<div style="left:3px;top:519px;width:1002px;height:1px;background:#000"></div>
<div style="left:3px;top:519px;width:1px;height:21px;background:#000"></div>
<div style="left:22px;top:538px;width:118px;height:1px;background:#e6e6e6"></div>
<div style="left:158px;top:538px;width:118px;height:1px;background:#e6e6e6"></div>
<div style="left:140px;top:537px;width:1px;height:2px;background:#000"></div>
<div style="left:276px;top:537px;width:1px;height:2px;background:#000"></div>
<div style="left:3px;top:541px;width:1003px;height:1px;background:#c0c0c0"></div>
<div style="left:3px;top:542px;width:1003px;height:14px;background:linear-gradient(#e9e7ed,#f2f0f4 45%,#fdfcff 60%,#fff)"></div>
<div style="left:3px;top:542px;width:15px;height:14px;background:linear-gradient(#fbfbfb,#e4e4e4);border-radius:2px;box-shadow:inset -1px -1px 0 #c8c8c8"></div>
<svg style="position:absolute;left:3px;top:542px;" width="15" height="14" viewBox="0 0 15 14"><path d="M3 7 L7 3 V5 H11 V9 L9 9 V11 H7 L7 9 Z" fill="#c8c8c8"/></svg>
<div style="left:19px;top:542px;width:955px;height:14px;background:linear-gradient(#8db0f0 0,#8db0f0 1px,#7d9ee0 1px,#7293d6 7px,#6c8dd0 13px,#5878c0 13px);border-radius:2px;box-shadow:inset 1px 0 0 #6a8ad0,inset -1px 0 0 #5878c0"></div>
<div style="left:492px;top:544px;width:1px;height:9px;background:#142c60"></div>
<div style="left:493px;top:544px;width:1px;height:9px;background:#9ab8f0"></div>
<div style="left:494px;top:544px;width:1px;height:9px;background:#142c60"></div>
<div style="left:495px;top:544px;width:1px;height:9px;background:#9ab8f0"></div>
<div style="left:496px;top:544px;width:1px;height:9px;background:#142c60"></div>
<div style="left:497px;top:544px;width:1px;height:9px;background:#9ab8f0"></div>
<div style="left:498px;top:544px;width:1px;height:9px;background:#142c60"></div>
<div style="left:499px;top:544px;width:1px;height:9px;background:#9ab8f0"></div>
<div style="left:500px;top:544px;width:1px;height:9px;background:#142c60"></div>
<div style="left:501px;top:544px;width:1px;height:9px;background:#9ab8f0"></div>
<div style="left:975px;top:542px;width:30px;height:14px;background:linear-gradient(#fbfbfb,#e4e4e4);border-radius:2px;box-shadow:inset -1px -1px 0 #c8c8c8"></div>
<svg style="position:absolute;left:975px;top:542px;" width="30" height="14" viewBox="0 0 30 14"><path d="M2 7 L6 3 V5 H11 V9 H6 V11 Z M23 3 L28 7 L23 11 V9 H18 V5 H23 Z" fill="#c8c8c8"/><rect x="14" y="3" width="1.5" height="8" fill="#000"/></svg>
<div style="left:3px;top:556px;width:1003px;height:1px;background:#c0c0c0"></div>
<div style="left:1006px;top:518px;width:15px;height:23px;background:linear-gradient(90deg,#fbfbfb,#e8e8e8);border-radius:2px;box-shadow:inset -1px -1px 0 #c8c8c8"></div>
<svg style="position:absolute;left:1006px;top:518px;" width="15" height="23" viewBox="0 0 15 23"><path d="M5 1 H10 V3 H5 Z M4 7 H10 V8 H4 Z M5 11 L9 11 L9 15 L12 15 L7 21 L2 15 L5 15 Z" fill="#000"/></svg>
<div style="left:2px;top:557px;width:1021px;height:3px;background:#000"></div>
<div style="left:2px;top:560px;width:1021px;height:1px;background:#fff"></div>
<div style="left:2px;top:561px;width:1004px;height:139px;background:#fff"></div>
<div style="left:2px;top:561px;width:1020px;height:14px;background:#ededed"></div>
<div style="left:2px;top:575px;width:1020px;height:1px;background:#c4c4c4"></div>
<div style="left:71px;top:560px;width:1px;height:16px;background:#000"></div>
<div style="left:191px;top:560px;width:1px;height:16px;background:#000"></div>
<div style="left:311px;top:560px;width:1px;height:16px;background:#000"></div>
<div style="left:431px;top:560px;width:1px;height:16px;background:#000"></div>
<div style="left:551px;top:560px;width:1px;height:16px;background:#000"></div>
<div style="left:671px;top:560px;width:1px;height:16px;background:#000"></div>
<div style="left:791px;top:560px;width:1px;height:16px;background:#000"></div>
<div style="left:911px;top:560px;width:1px;height:16px;background:#000"></div>
<div style="left:2px;top:561px;width:1px;height:139px;background:#fff"></div>
<div style="left:191px;top:576px;width:1px;height:124px;background:#c6c6c6"></div>
<div style="left:311px;top:576px;width:1px;height:124px;background:#c6c6c6"></div>
<div style="left:431px;top:576px;width:1px;height:124px;background:#c6c6c6"></div>
<div style="left:551px;top:576px;width:1px;height:124px;background:#c6c6c6"></div>
<div style="left:671px;top:576px;width:1px;height:124px;background:#c6c6c6"></div>
<div style="left:791px;top:576px;width:1px;height:124px;background:#c6c6c6"></div>
<div style="left:911px;top:576px;width:1px;height:124px;background:#c6c6c6"></div>
<div style="left:2px;top:575px;width:70px;height:1px;background:#000"></div>
<div style="left:3px;top:576px;width:68px;height:15px;background:#ededed;border-right:1px solid #c4c4c4"></div>
<div style="left:72px;top:591px;width:934px;height:1px;background:#c6c6c6"></div>
<span style="left:4px;top:576px;font-size:11px;line-height:13px">Field</span>
<div style="left:2px;top:591px;width:70px;height:1px;background:#000"></div>
<div style="left:3px;top:592px;width:68px;height:15px;background:#ededed;border-right:1px solid #c4c4c4"></div>
<div style="left:72px;top:607px;width:934px;height:1px;background:#c6c6c6"></div>
<span style="left:4px;top:592px;font-size:11px;line-height:13px">Alias</span>
<div style="left:2px;top:607px;width:70px;height:1px;background:#000"></div>
<div style="left:3px;top:608px;width:68px;height:15px;background:#ededed;border-right:1px solid #c4c4c4"></div>
<div style="left:72px;top:623px;width:934px;height:1px;background:#c6c6c6"></div>
<span style="left:4px;top:608px;font-size:11px;line-height:13px">Table</span>
<div style="left:2px;top:623px;width:70px;height:1px;background:#000"></div>
<div style="left:3px;top:624px;width:68px;height:15px;background:#ededed;border-right:1px solid #c4c4c4"></div>
<div style="left:72px;top:639px;width:934px;height:1px;background:#c6c6c6"></div>
<span style="left:4px;top:624px;font-size:11px;line-height:13px">Sort</span>
<div style="left:2px;top:639px;width:70px;height:1px;background:#000"></div>
<div style="left:3px;top:640px;width:68px;height:15px;background:#ededed;border-right:1px solid #c4c4c4"></div>
<div style="left:72px;top:655px;width:934px;height:1px;background:#c6c6c6"></div>
<span style="left:4px;top:640px;font-size:11px;line-height:13px">Visible</span>
<div style="left:2px;top:655px;width:70px;height:1px;background:#000"></div>
<div style="left:3px;top:656px;width:68px;height:15px;background:#ededed;border-right:1px solid #c4c4c4"></div>
<div style="left:72px;top:671px;width:934px;height:1px;background:#c6c6c6"></div>
<span style="left:4px;top:656px;font-size:11px;line-height:13px">Function</span>
<div style="left:2px;top:671px;width:70px;height:1px;background:#000"></div>
<div style="left:3px;top:672px;width:68px;height:15px;background:#ededed;border-right:1px solid #c4c4c4"></div>
<div style="left:72px;top:687px;width:934px;height:1px;background:#c6c6c6"></div>
<span style="left:4px;top:672px;font-size:11px;line-height:13px">Criterion</span>
<div style="left:2px;top:687px;width:70px;height:1px;background:#000"></div>
<div style="left:3px;top:688px;width:68px;height:15px;background:#ededed;border-right:1px solid #c4c4c4"></div>
<div style="left:72px;top:703px;width:934px;height:1px;background:#c6c6c6"></div>
<span style="left:4px;top:688px;font-size:11px;line-height:13px">Or</span>
<div style="left:71px;top:575px;width:1px;height:125px;background:#000"></div>
<span style="left:74px;top:576px;font-size:11px;line-height:13px">fst_name</span>
<span style="left:74px;top:608px;font-size:11px;line-height:13px">person</span>
<span style="left:194px;top:576px;font-size:11px;line-height:13px">lst_name</span>
<span style="left:194px;top:608px;font-size:11px;line-height:13px">person</span>
<span style="left:314px;top:576px;font-size:11px;line-height:13px">address1</span>
<span style="left:314px;top:608px;font-size:11px;line-height:13px">address</span>
<span style="left:434px;top:576px;font-size:11px;line-height:13px">address2</span>
<span style="left:434px;top:608px;font-size:11px;line-height:13px">address</span>
<span style="left:554px;top:576px;font-size:11px;line-height:13px">city</span>
<span style="left:554px;top:608px;font-size:11px;line-height:13px">address</span>
<span style="left:674px;top:576px;font-size:11px;line-height:13px">state</span>
<span style="left:674px;top:608px;font-size:11px;line-height:13px">address</span>
<span style="left:794px;top:576px;font-size:11px;line-height:13px">zip</span>
<span style="left:794px;top:608px;font-size:11px;line-height:13px">address</span>
<div style="left:125px;top:641px;width:13px;height:13px;background:linear-gradient(#fdfdfd,#d4d4d4);border:1px solid #bdbdbd;border-radius:3px"></div>
<div style="left:127px;top:643px;width:9px;height:9px;border:1px solid #8c8c8c;border-right-color:#c8c8c8;border-bottom-color:#c8c8c8;background:linear-gradient(#f4f4f4,#fafafa)"></div>
<svg style="position:absolute;left:125px;top:641px;" width="13" height="13" viewBox="0 0 13 13"><path d="M3.6 3.6 L9.4 9.4 M9.4 3.6 L3.6 9.4" stroke="#2c2c2c" stroke-width="1.5"/></svg>
<div style="left:245px;top:641px;width:13px;height:13px;background:linear-gradient(#fdfdfd,#d4d4d4);border:1px solid #bdbdbd;border-radius:3px"></div>
<div style="left:247px;top:643px;width:9px;height:9px;border:1px solid #8c8c8c;border-right-color:#c8c8c8;border-bottom-color:#c8c8c8;background:linear-gradient(#f4f4f4,#fafafa)"></div>
<svg style="position:absolute;left:245px;top:641px;" width="13" height="13" viewBox="0 0 13 13"><path d="M3.6 3.6 L9.4 9.4 M9.4 3.6 L3.6 9.4" stroke="#2c2c2c" stroke-width="1.5"/></svg>
<div style="left:365px;top:641px;width:13px;height:13px;background:linear-gradient(#fdfdfd,#d4d4d4);border:1px solid #bdbdbd;border-radius:3px"></div>
<div style="left:367px;top:643px;width:9px;height:9px;border:1px solid #8c8c8c;border-right-color:#c8c8c8;border-bottom-color:#c8c8c8;background:linear-gradient(#f4f4f4,#fafafa)"></div>
<svg style="position:absolute;left:365px;top:641px;" width="13" height="13" viewBox="0 0 13 13"><path d="M3.6 3.6 L9.4 9.4 M9.4 3.6 L3.6 9.4" stroke="#2c2c2c" stroke-width="1.5"/></svg>
<div style="left:485px;top:641px;width:13px;height:13px;background:linear-gradient(#fdfdfd,#d4d4d4);border:1px solid #bdbdbd;border-radius:3px"></div>
<div style="left:487px;top:643px;width:9px;height:9px;border:1px solid #8c8c8c;border-right-color:#c8c8c8;border-bottom-color:#c8c8c8;background:linear-gradient(#f4f4f4,#fafafa)"></div>
<svg style="position:absolute;left:485px;top:641px;" width="13" height="13" viewBox="0 0 13 13"><path d="M3.6 3.6 L9.4 9.4 M9.4 3.6 L3.6 9.4" stroke="#2c2c2c" stroke-width="1.5"/></svg>
<div style="left:605px;top:641px;width:13px;height:13px;background:linear-gradient(#fdfdfd,#d4d4d4);border:1px solid #bdbdbd;border-radius:3px"></div>
<div style="left:607px;top:643px;width:9px;height:9px;border:1px solid #8c8c8c;border-right-color:#c8c8c8;border-bottom-color:#c8c8c8;background:linear-gradient(#f4f4f4,#fafafa)"></div>
<svg style="position:absolute;left:605px;top:641px;" width="13" height="13" viewBox="0 0 13 13"><path d="M3.6 3.6 L9.4 9.4 M9.4 3.6 L3.6 9.4" stroke="#2c2c2c" stroke-width="1.5"/></svg>
<div style="left:725px;top:641px;width:13px;height:13px;background:linear-gradient(#fdfdfd,#d4d4d4);border:1px solid #bdbdbd;border-radius:3px"></div>
<div style="left:727px;top:643px;width:9px;height:9px;border:1px solid #8c8c8c;border-right-color:#c8c8c8;border-bottom-color:#c8c8c8;background:linear-gradient(#f4f4f4,#fafafa)"></div>
<svg style="position:absolute;left:725px;top:641px;" width="13" height="13" viewBox="0 0 13 13"><path d="M3.6 3.6 L9.4 9.4 M9.4 3.6 L3.6 9.4" stroke="#2c2c2c" stroke-width="1.5"/></svg>
<div style="left:845px;top:641px;width:13px;height:13px;background:linear-gradient(#fdfdfd,#d4d4d4);border:1px solid #bdbdbd;border-radius:3px"></div>
<div style="left:847px;top:643px;width:9px;height:9px;border:1px solid #8c8c8c;border-right-color:#c8c8c8;border-bottom-color:#c8c8c8;background:linear-gradient(#f4f4f4,#fafafa)"></div>
<svg style="position:absolute;left:845px;top:641px;" width="13" height="13" viewBox="0 0 13 13"><path d="M3.6 3.6 L9.4 9.4 M9.4 3.6 L3.6 9.4" stroke="#2c2c2c" stroke-width="1.5"/></svg>
<div style="left:965px;top:641px;width:13px;height:13px;background:linear-gradient(#fdfdfd,#d4d4d4);border:1px solid #bdbdbd;border-radius:3px"></div>
<div style="left:967px;top:643px;width:9px;height:9px;border:1px solid #8c8c8c;border-right-color:#c8c8c8;border-bottom-color:#c8c8c8;background:linear-gradient(#f4f4f4,#fafafa)"></div>
<div style="left:1005px;top:576px;width:1px;height:124px;background:#c0c0c0"></div>
<div style="left:1006px;top:576px;width:15px;height:124px;background:linear-gradient(90deg,#e9e7ed,#f2f0f4 45%,#fdfcff 60%,#fff)"></div>
<div style="left:1006px;top:577px;width:14px;height:16px;background:linear-gradient(90deg,#fbfbfb,#e8e8e8);border-radius:2px;box-shadow:inset -1px -1px 0 #c8c8c8"></div>
<svg style="position:absolute;left:1006px;top:577px;" width="14" height="16" viewBox="0 0 14 16"><path d="M7 3 L12 8 L9 8 L9 13 L5 13 L5 8 L2 8 Z" fill="#000"/></svg>
<div style="left:1006px;top:593px;width:14px;height:47px;background:linear-gradient(90deg,#8db0f0 0,#8db0f0 1px,#7d9ee0 1px,#7293d6 7px,#6c8dd0 13px,#5878c0 13px);border-radius:2px;box-shadow:inset 0 1px 0 #5878c0,inset 0 -1px 0 #5878c0"></div>
<div style="left:1008px;top:612px;width:9px;height:1px;background:#142c60"></div>
<div style="left:1008px;top:613px;width:9px;height:1px;background:#9ab8f0"></div>
<div style="left:1008px;top:614px;width:9px;height:1px;background:#142c60"></div>
<div style="left:1008px;top:615px;width:9px;height:1px;background:#9ab8f0"></div>
<div style="left:1008px;top:616px;width:9px;height:1px;background:#142c60"></div>
<div style="left:1008px;top:617px;width:9px;height:1px;background:#9ab8f0"></div>
<div style="left:1008px;top:618px;width:9px;height:1px;background:#142c60"></div>
<div style="left:1008px;top:619px;width:9px;height:1px;background:#9ab8f0"></div>
<div style="left:1008px;top:620px;width:9px;height:1px;background:#142c60"></div>
<div style="left:1008px;top:621px;width:9px;height:1px;background:#9ab8f0"></div>
<div style="left:1006px;top:669px;width:14px;height:31px;background:linear-gradient(90deg,#fbfbfb,#e8e8e8);border-radius:2px;box-shadow:inset -1px -1px 0 #c8c8c8"></div>
<svg style="position:absolute;left:1006px;top:669px;" width="14" height="31" viewBox="0 0 14 31"><path d="M7 3.5 L12 8.5 L9 8.5 L9 12 L5 12 L5 8.5 L2 8.5 Z M4 15 H10 V16 H4 Z M5 19 L9 19 L9 23 L12 23 L7 28 L2 23 L5 23 Z" fill="#000"/></svg>
<div style="left:2px;top:700px;width:1004px;height:1px;background:#c0c0c0"></div>
<div style="left:2px;top:701px;width:1004px;height:14px;background:linear-gradient(#e9e7ed,#f2f0f4 45%,#fdfcff 60%,#fff)"></div>
<div style="left:3px;top:701px;width:15px;height:14px;background:linear-gradient(#fbfbfb,#e4e4e4);border-radius:2px;box-shadow:inset -1px -1px 0 #c8c8c8"></div>
<svg style="position:absolute;left:3px;top:701px;" width="15" height="14" viewBox="0 0 15 14"><path d="M2 7 L7 2 V5 H11 V9 H7 V12 Z" fill="#000"/></svg>
<div style="left:19px;top:701px;width:334px;height:14px;background:linear-gradient(#8db0f0 0,#8db0f0 1px,#7d9ee0 1px,#7293d6 7px,#6c8dd0 13px,#5878c0 13px);border-radius:2px;box-shadow:inset 1px 0 0 #6a8ad0,inset -1px 0 0 #5878c0"></div>
<div style="left:181px;top:703px;width:1px;height:9px;background:#142c60"></div>
<div style="left:182px;top:703px;width:1px;height:9px;background:#9ab8f0"></div>
<div style="left:183px;top:703px;width:1px;height:9px;background:#142c60"></div>
<div style="left:184px;top:703px;width:1px;height:9px;background:#9ab8f0"></div>
<div style="left:185px;top:703px;width:1px;height:9px;background:#142c60"></div>
<div style="left:186px;top:703px;width:1px;height:9px;background:#9ab8f0"></div>
<div style="left:187px;top:703px;width:1px;height:9px;background:#142c60"></div>
<div style="left:188px;top:703px;width:1px;height:9px;background:#9ab8f0"></div>
<div style="left:189px;top:703px;width:1px;height:9px;background:#142c60"></div>
<div style="left:190px;top:703px;width:1px;height:9px;background:#9ab8f0"></div>
<div style="left:975px;top:701px;width:30px;height:14px;background:linear-gradient(#fbfbfb,#e4e4e4);border-radius:2px;box-shadow:inset -1px -1px 0 #c8c8c8"></div>
<svg style="position:absolute;left:975px;top:701px;" width="30" height="14" viewBox="0 0 30 14"><path d="M2 7 L6 3 V5 H11 V9 H6 V11 Z M23 3 L28 7 L23 11 V9 H18 V5 H23 Z" fill="#000"/><rect x="14" y="3" width="1.5" height="8" fill="#000"/></svg>
<div style="left:2px;top:715px;width:1004px;height:1px;background:#c0c0c0"></div>
<svg style="position:absolute;left:0px;top:0px;width:0;height:0" width="1" height="1" viewBox="0 0 1 1"><defs><pattern id="dg" width="2" height="2" patternUnits="userSpaceOnUse"><rect width="1" height="1" fill="#7a807a"/><rect x="1" y="1" width="1" height="1" fill="#7a807a"/></pattern><pattern id="dl" width="2" height="2" patternUnits="userSpaceOnUse"><rect width="1" height="1" fill="#a8a8a8"/><rect x="1" y="1" width="1" height="1" fill="#fafafa"/></pattern><pattern id="db" width="2" height="2" patternUnits="userSpaceOnUse"><rect width="1" height="1" fill="#5a78c0"/><rect x="1" y="1" width="1" height="1" fill="#5a78c0"/></pattern></defs></svg>
<div style="left:28px;top:53px;width:1px;height:13px;background:#fff"></div>
<div style="left:105px;top:53px;width:1px;height:13px;background:#fff"></div>
<div style="left:205px;top:53px;width:1px;height:13px;background:#fff"></div>
<div style="left:236px;top:53px;width:1px;height:13px;background:#fff"></div>
<div style="left:313px;top:53px;width:1px;height:13px;background:#fff"></div>
<div style="left:28px;top:497px;width:1px;height:13px;background:#fff"></div>
<div style="left:105px;top:497px;width:1px;height:13px;background:#fff"></div>
<div style="left:205px;top:497px;width:1px;height:13px;background:#fff"></div>
<div style="left:236px;top:497px;width:1px;height:13px;background:#fff"></div>
<div style="left:290px;top:497px;width:1px;height:13px;background:#fff"></div>
<div style="left:367px;top:497px;width:1px;height:13px;background:#fff"></div>
<svg style="position:absolute;left:6px;top:55px;" width="15" height="12" viewBox="0 0 15 12"><path d="M2 0H5V3H6V11H0V3H2Z M9 0H12V3H14V11H8.5V3H9Z M5 4H9V8H5Z" fill="#000"/><rect x="1" y="8" width="1" height="2" fill="#ee8"/><rect x="9.5" y="1" width="1" height="2" fill="#ee8"/><rect x="9.5" y="8" width="1" height="2" fill="#ee8"/><rect x="7" y="5" width="1" height="2" fill="#ee8"/><rect x="2.5" y="1" width="1" height="2" fill="#fff"/><rect x="2" y="4" width="1" height="3" fill="#fff"/></svg>
<svg style="position:absolute;left:36px;top:53px;" width="16" height="16" viewBox="0 0 16 16"><path d="M3.5 14.5V4" stroke="#000" stroke-width="1.3"/><path d="M0.8 6 L3.5 1 L6.2 6Z" fill="#000"/><path d="M8.6 7.2 L11.5 0.6 L14.4 7.2 M9.8 4.6H13.2 M8 7.2H10 M13 7.2H15" stroke="#1f55b8" stroke-width="1.4" fill="none"/><path d="M9.3 8.8H14.7L9.3 14.3H14.9" stroke="#a81414" stroke-width="1.8" fill="none"/></svg>
<svg style="position:absolute;left:60px;top:53px;" width="16" height="16" viewBox="0 0 16 16"><path d="M2.5 1V11" stroke="#000" stroke-width="1.3"/><path d="M0 9 L2.5 14 L5 9Z" fill="#000"/><path d="M8.3 0.8H13.7L8.3 6.3H13.9" stroke="#a81414" stroke-width="1.8" fill="none"/><path d="M7.6 15.2 L10.5 8.6 L13.4 15.2 M8.8 12.6H12.2 M7 15.2H9 M12 15.2H14" stroke="#1f55b8" stroke-width="1.4" fill="none"/></svg>
<svg style="position:absolute;left:81px;top:52px;" width="17" height="17" viewBox="0 0 17 17"><path d="M1.2 9.2H12.8L9 13.2V15.3H5V13.2Z" fill="#fff" stroke="#000" stroke-width="1.5" stroke-linejoin="round"/><path d="M6.5 11H8 M7.2 10.3V11.7 M8.5 10H10" stroke="#d08a20" stroke-width="1"/><path d="M13.6 1.2V7.6 M10.4 4.4H16.8" stroke="#9a9a9a" stroke-width="1.3"/><circle cx="13.6" cy="4.4" r="1.3" fill="#9a9a9a"/></svg>
<svg style="position:absolute;left:114px;top:52px;" width="15" height="17" viewBox="0 0 15 17"><path d="M0.7 3.5 L5 8.5V15.5Q7 16.8 9 15.5V8.5L13.5 3.5" fill="#f4f4f4" stroke="#8a8a8a" stroke-width="1"/><ellipse cx="7" cy="3.3" rx="6.6" ry="2.6" fill="#f8f8f8" stroke="#9a9a9a" stroke-width="0.9"/><ellipse cx="6.5" cy="3.6" rx="5" ry="1.6" fill="#000"/><path d="M6 9V15" stroke="#c0c0c0" stroke-width="1"/></svg>
<svg style="position:absolute;left:140px;top:53px;" width="9" height="16" viewBox="0 0 9 16"><path d="M1 1 H7 L1.4 6.1 H7.2" stroke="#000" stroke-width="1.5" fill="none"/><path d="M1 0.3 V2.4 M7.2 4.6 V6.8" stroke="#000" stroke-width="1.1"/><path d="M1.6 14.8 L4.4 8.2 L7.2 14.8 M2.6 12.4 H6.2" stroke="#000" stroke-width="1.4" fill="none"/><path d="M0.4 14.9 H3 M5.8 14.9 H8.4" stroke="#000" stroke-width="1.2"/></svg>
<svg style="position:absolute;left:158px;top:52px;" width="17" height="17" viewBox="0 0 17 17"><path d="M1.2 9.2H12.8L9 13.2V15.3H5V13.2Z" fill="#dcdcdc" stroke="#7a807a" stroke-width="1.3" stroke-dasharray="1 1"/><path d="M8.5 1.5L15.5 8.5M15.5 1.5L8.5 8.5" stroke="#b07070" stroke-width="1.4" stroke-dasharray="1 1"/></svg>
<svg style="position:absolute;left:183px;top:52px;" width="17" height="17" viewBox="0 0 17 17"><path d="M1.2 9.2H12.8L9 13.2V15.3H5V13.2Z" fill="#f2f2f2" stroke="#7a807a" stroke-width="1.3" stroke-dasharray="1 1"/><path d="M5.5 4L8 6.5L13 1.5" stroke="#50a060" stroke-width="1.4" stroke-dasharray="1 0.6" fill="none"/><path d="M6.5 11H8 M7.2 10.3V11.7" stroke="#c08a50" stroke-width="1"/></svg>
<svg style="position:absolute;left:213px;top:52px;" width="18" height="16" viewBox="0 0 18 16"><path d="M0.8 3.5Q4 1.5 7.5 3.5V11.5Q4 13.5 0.8 11.5Z" fill="#fff" stroke="#000" stroke-width="1.5"/><path d="M0.8 6Q4 8 7.5 6 M0.8 8.8Q4 10.8 7.5 8.8" stroke="#000" stroke-width="1.2" fill="none"/><path d="M10 0.5H17L13.5 3.8Z" fill="#2f6bd0"/><path d="M9 6.5H13.5Q15.5 6.5 15.5 8.5Q15.5 10.5 13.5 10.5H11" stroke="#1448b0" stroke-width="2" fill="none"/><path d="M12 8 L8.8 10.8 L12 14" fill="#1448b0"/></svg>
<svg style="position:absolute;left:244px;top:52px;" width="14" height="16" viewBox="0 0 14 16"><rect x="0" y="0" width="12" height="16" fill="url(#dl)"/><path d="M10 1L3 13" stroke="#d8b870" stroke-width="1.5" stroke-dasharray="1 1"/></svg>
<svg style="position:absolute;left:267px;top:54px;" width="15" height="13" viewBox="0 0 15 13"><path d="M2 0.5H14.5V12.5H2V8H0.5V4H2Z" fill="url(#dg)"/><rect x="5" y="1.5" width="7" height="4" fill="#e4e4e4"/><rect x="4" y="8" width="7" height="4" fill="#c8c8c8" opacity="0.6"/></svg>
<svg style="position:absolute;left:290px;top:57px;" width="15" height="8" viewBox="0 0 15 8"><path d="M0.5 0.5L4 3.5L0.5 6.5Z" fill="url(#dg)"/><path d="M5.5 5.5H12Q14 5.5 14 3.5Q14 1.8 12 1.8H10.5" stroke="#6d88c0" stroke-width="1" stroke-dasharray="1.2 1" fill="none"/></svg>
<svg style="position:absolute;left:321px;top:53px;" width="16" height="15" viewBox="0 0 16 15"><rect x="4" y="1" width="1.2" height="1.2" fill="#a8a8a8"/><rect x="4" y="3" width="1.2" height="1.2" fill="#a8a8a8"/><rect x="4" y="5" width="1.2" height="1.2" fill="#a8a8a8"/><rect x="4" y="7" width="1.2" height="1.2" fill="#a8a8a8"/><rect x="4" y="9" width="1.2" height="1.2" fill="#a8a8a8"/><rect x="4" y="11" width="1.2" height="1.2" fill="#a8a8a8"/><rect x="4" y="13" width="1.2" height="1.2" fill="#a8a8a8"/><rect x="6" y="1" width="1.2" height="1.2" fill="#a8a8a8"/><rect x="6" y="3" width="1.2" height="1.2" fill="#a8a8a8"/><rect x="6" y="5" width="1.2" height="1.2" fill="#a8a8a8"/><rect x="6" y="7" width="1.2" height="1.2" fill="#a8a8a8"/><rect x="6" y="9" width="1.2" height="1.2" fill="#a8a8a8"/><rect x="6" y="11" width="1.2" height="1.2" fill="#a8a8a8"/><rect x="6" y="13" width="1.2" height="1.2" fill="#a8a8a8"/><rect x="8" y="1" width="1.2" height="1.2" fill="#a8a8a8"/><rect x="8" y="3" width="1.2" height="1.2" fill="#a8a8a8"/><rect x="8" y="5" width="1.2" height="1.2" fill="#a8a8a8"/><rect x="8" y="7" width="1.2" height="1.2" fill="#a8a8a8"/><rect x="8" y="9" width="1.2" height="1.2" fill="#a8a8a8"/><rect x="8" y="11" width="1.2" height="1.2" fill="#a8a8a8"/><rect x="8" y="13" width="1.2" height="1.2" fill="#a8a8a8"/><rect x="10" y="1" width="1.2" height="1.2" fill="#a8a8a8"/><rect x="10" y="3" width="1.2" height="1.2" fill="#a8a8a8"/><rect x="10" y="5" width="1.2" height="1.2" fill="#a8a8a8"/><rect x="10" y="7" width="1.2" height="1.2" fill="#a8a8a8"/><rect x="10" y="9" width="1.2" height="1.2" fill="#a8a8a8"/><rect x="10" y="11" width="1.2" height="1.2" fill="#a8a8a8"/><rect x="10" y="13" width="1.2" height="1.2" fill="#a8a8a8"/><path d="M5 8H12" stroke="#c8d090" stroke-dasharray="1 1"/><path d="M0.5 5L3 7.5L0.5 10" stroke="#4a70b0" stroke-width="1" fill="none"/><path d="M15 5L12.5 7.5L15 10" stroke="#b8b8b8" stroke-width="0.9" fill="none"/></svg>
<svg style="position:absolute;left:344px;top:53px;" width="16" height="15" viewBox="0 0 16 15"><rect x="4" y="1" width="1.2" height="1.2" fill="#a8a8a8"/><rect x="4" y="3" width="1.2" height="1.2" fill="#a8a8a8"/><rect x="4" y="5" width="1.2" height="1.2" fill="#a8a8a8"/><rect x="4" y="7" width="1.2" height="1.2" fill="#a8a8a8"/><rect x="4" y="9" width="1.2" height="1.2" fill="#a8a8a8"/><rect x="4" y="11" width="1.2" height="1.2" fill="#a8a8a8"/><rect x="4" y="13" width="1.2" height="1.2" fill="#a8a8a8"/><rect x="6" y="1" width="1.2" height="1.2" fill="#a8a8a8"/><rect x="6" y="3" width="1.2" height="1.2" fill="#a8a8a8"/><rect x="6" y="5" width="1.2" height="1.2" fill="#a8a8a8"/><rect x="6" y="7" width="1.2" height="1.2" fill="#a8a8a8"/><rect x="6" y="9" width="1.2" height="1.2" fill="#a8a8a8"/><rect x="6" y="11" width="1.2" height="1.2" fill="#a8a8a8"/><rect x="6" y="13" width="1.2" height="1.2" fill="#a8a8a8"/><rect x="8" y="1" width="1.2" height="1.2" fill="#a8a8a8"/><rect x="8" y="3" width="1.2" height="1.2" fill="#a8a8a8"/><rect x="8" y="5" width="1.2" height="1.2" fill="#a8a8a8"/><rect x="8" y="7" width="1.2" height="1.2" fill="#a8a8a8"/><rect x="8" y="9" width="1.2" height="1.2" fill="#a8a8a8"/><rect x="8" y="11" width="1.2" height="1.2" fill="#a8a8a8"/><rect x="8" y="13" width="1.2" height="1.2" fill="#a8a8a8"/><rect x="10" y="1" width="1.2" height="1.2" fill="#a8a8a8"/><rect x="10" y="3" width="1.2" height="1.2" fill="#a8a8a8"/><rect x="10" y="5" width="1.2" height="1.2" fill="#a8a8a8"/><rect x="10" y="7" width="1.2" height="1.2" fill="#a8a8a8"/><rect x="10" y="9" width="1.2" height="1.2" fill="#a8a8a8"/><rect x="10" y="11" width="1.2" height="1.2" fill="#a8a8a8"/><rect x="10" y="13" width="1.2" height="1.2" fill="#a8a8a8"/><circle cx="7.5" cy="7.5" r="2" fill="none" stroke="#b8c0a0" stroke-width="0.9"/><circle cx="10.5" cy="7.5" r="2" fill="none" stroke="#b8c0a0" stroke-width="0.9"/><path d="M0.5 5L3 7.5L0.5 10" stroke="#4a70b0" stroke-width="1" fill="none"/><path d="M15 5L12.5 7.5L15 10" stroke="#b8b8b8" stroke-width="0.9" fill="none"/></svg>
<svg style="position:absolute;left:367px;top:52px;" width="17" height="17" viewBox="0 0 17 17"><path d="M0.5 0.5H8L10.5 3V13.5H0.5Z" fill="#fff" stroke="#000" stroke-width="1"/><path d="M7.5 0.5V3.5H10.5" stroke="#000" fill="none"/><rect x="5.5" y="8.5" width="10.5" height="7.5" fill="#fffbe8" stroke="#000" stroke-width="1.2"/><path d="M6 9L10.7 12.5L15.5 9" stroke="#555" stroke-width="0.8" fill="none"/></svg>
<svg style="position:absolute;left:391px;top:53px;" width="14" height="15" viewBox="0 0 14 15"><rect x="0.7" y="0.7" width="7.6" height="8" fill="#d8d8d8" stroke="#000" stroke-width="1.3"/><rect x="1.5" y="1.5" width="6" height="1.2" fill="#8ad8c8"/><rect x="5.7" y="5.8" width="7.6" height="8" fill="#fff" stroke="#000" stroke-width="1.3"/><rect x="6.5" y="6.6" width="6" height="1.2" fill="#8ad8c8"/><path d="M3 9.5Q0.5 13.5 3.5 14Q6 14 9.5 9.5" stroke="#1a55c0" stroke-width="1.1" fill="none"/><path d="M8 9H11V12Z" fill="#1a55c0"/></svg>
<svg style="position:absolute;left:414px;top:53px;" width="15" height="14" viewBox="0 0 15 14"><path d="M1 4.5H5L6 5.5H12V12.5H1Z" fill="#9a9a9a" stroke="#000" stroke-width="1.3"/><rect x="1.6" y="5.2" width="10" height="2.2" fill="#f0f0f0"/><rect x="4" y="9" width="3" height="1" fill="#000"/><path d="M7.5 2.5Q10 0.5 13.5 3" stroke="#000" stroke-width="1.1" fill="none"/><path d="M6.5 1L9.5 1.5L7.8 4Z" fill="#000"/></svg>
<svg style="position:absolute;left:6px;top:497px;" width="15" height="15" viewBox="0 0 15 15"><path d="M0.6 3.2 V11 Q0.6 13.6 4 13.6 Q7.4 13.6 7.4 11 V3.2" fill="#fff" stroke="#000" stroke-width="1.3"/><path d="M0.6 6.2 Q0.6 8.2 4 8.2 Q7.4 8.2 7.4 6.2 M0.6 8.6 Q0.6 10.6 4 10.6 Q7.4 10.6 7.4 8.6" stroke="#000" stroke-width="1" fill="none"/><ellipse cx="4" cy="3.3" rx="3.4" ry="2.6" fill="#fff" stroke="#000" stroke-width="1.3"/><rect x="3" y="2.8" width="2" height="1.1" fill="#000"/><path d="M11.6 3V10" stroke="#1a50b0" stroke-width="1.3"/><path d="M9.2 8.5L11.6 12.8L14 8.5Z" fill="#1a50b0"/></svg>
<svg style="position:absolute;left:37px;top:497px;" width="15" height="15" viewBox="0 0 15 15"><path d="M3.5 3.5V1.3H12.5V3.5 M3.5 11.5V13.7H12.5V11.5" stroke="#000" stroke-width="1.3" fill="none"/><path d="M5 3.5H11 M5 5.5H8" stroke="#999" stroke-width="0.8"/><path d="M0 8H5" stroke="#1a50b0" stroke-width="1.4"/><path d="M4 5.8L6.5 8L4 10.2Z" fill="#1a50b0"/><path d="M9 6L13.5 10.8M13.5 6L9 10.8" stroke="#b01818" stroke-width="1.6"/></svg>
<div style="left:56px;top:493px;width:23px;height:23px;background:#d3ddec;border:1px solid #3f78d6;box-shadow:inset 1px 1px 0 #e4ebf5"></div>
<div style="left:110px;top:493px;width:23px;height:23px;background:#d3ddec;border:1px solid #3f78d6;box-shadow:inset 1px 1px 0 #e4ebf5"></div>
<div style="left:133px;top:493px;width:23px;height:23px;background:#d3ddec;border:1px solid #3f78d6;box-shadow:inset 1px 1px 0 #e4ebf5"></div>
<div style="left:156px;top:493px;width:23px;height:23px;background:#d3ddec;border:1px solid #3f78d6;box-shadow:inset 1px 1px 0 #e4ebf5"></div>
<div style="left:210px;top:493px;width:23px;height:23px;background:#d3ddec;border:1px solid #3f78d6;box-shadow:inset 1px 1px 0 #e4ebf5"></div>
<svg style="position:absolute;left:59px;top:495px;" width="18" height="18" viewBox="0 0 18 18"><rect x="2.5" y="1" width="13.5" height="13" fill="#fff" stroke="#404060" stroke-width="0.9"/><rect x="2.7" y="1.2" width="13" height="2.2" fill="#5a40c8"/><path d="M8 5.5H14 M8 7.5H14 M8 9.5H14 M8 11.5H14" stroke="#606070" stroke-width="0.9"/><path d="M6 5L9 9" stroke="#5a40c8" stroke-width="1.6"/><path d="M0.5 4.5L12.5 16.5H0.5Z" fill="#f8d030" stroke="#505060" stroke-width="0.9"/><path d="M3 10L6 14H3Z" fill="#d3ddec" stroke="#404060" stroke-width="0.8"/></svg>
<svg style="position:absolute;left:82px;top:497px;" width="17" height="15" viewBox="0 0 17 15"><path d="M2.8 0.5H5.2V2.8H7.5V5.2H5.2V7.5H2.8V5.2H0.5V2.8H2.8Z" fill="#90e0d0" stroke="#000" stroke-width="1"/><rect x="7.5" y="6.5" width="8.5" height="8" fill="#fff" stroke="#000" stroke-width="1.3"/><rect x="8.2" y="7.2" width="7" height="1.6" fill="#000"/><path d="M9 8H15" stroke="#a0e0d8" stroke-width="0.8" stroke-dasharray="1 1"/></svg>
<svg style="position:absolute;left:112px;top:494px;" width="20" height="20" viewBox="0 0 20 20"><g transform="translate(6,4)"><ellipse cx="4" cy="3.6" rx="2.8" ry="1.2" fill="#fff"/><path d="M0.4 3.2 L2.3 1.6 H7.6 L9.2 2.8" stroke="#000" stroke-width="1.6" fill="none"/><ellipse cx="3.6" cy="2.8" rx="2" ry="1.3" fill="#000"/><circle cx="3.4" cy="2.6" r="0.8" fill="#22aa44"/><path d="M3.9 0.8V-0.4 M5.9 0.8V-0.4 M7.9 0.8V-0.4" stroke="#a86010" stroke-width="1.1"/><rect x="10.2" y="0.3" width="0.9" height="1.6" fill="#b0b0b0"/><circle cx="0.5" cy="2.5" r="0.6" fill="#d08020"/><circle cx="5" cy="3" r="0.6" fill="#d08020"/><circle cx="9.4" cy="2.6" r="0.6" fill="#d08020"/><circle cx="2.4" cy="5.3" r="0.6" fill="#d08020"/><circle cx="3.1" cy="4.3" r="0.5" fill="#d08020"/><path d="M6.4 4.7 H8.4" stroke="#a0a0a0" stroke-width="0.8"/></g><path d="M6.8 9.9 Q5.2 8.7 4.8 11 L4.2 16 Q3.8 18 1.8 17.4" stroke="#000" stroke-width="1.3" fill="none"/><path d="M1.8 12.4 H6.4" stroke="#000" stroke-width="1.2"/><path d="M7.3 12 Q6 14.6 7.2 17.2" stroke="#000" stroke-width="1" fill="none"/><path d="M7.9 12.7 L10.9 16 M10.9 12.7 L7.9 16" stroke="#000" stroke-width="1.3"/><path d="M11.9 12.2 Q13.9 14.4 11.9 16.7" stroke="#000" stroke-width="1.3" fill="none"/></svg>
<svg style="position:absolute;left:135px;top:494px;" width="20" height="20" viewBox="0 0 20 20"><g transform="translate(2,4)"><ellipse cx="4" cy="3.6" rx="2.8" ry="1.2" fill="#fff"/><path d="M0.4 3.2 L2.3 1.6 H7.6 L9.2 2.8" stroke="#000" stroke-width="1.6" fill="none"/><ellipse cx="3.6" cy="2.8" rx="2" ry="1.3" fill="#000"/><circle cx="3.4" cy="2.6" r="0.8" fill="#22aa44"/><path d="M3.9 0.8V-0.4 M5.9 0.8V-0.4 M7.9 0.8V-0.4" stroke="#a86010" stroke-width="1.1"/><rect x="10.2" y="0.3" width="0.9" height="1.6" fill="#b0b0b0"/><circle cx="0.5" cy="2.5" r="0.6" fill="#d08020"/><circle cx="5" cy="3" r="0.6" fill="#d08020"/><circle cx="9.4" cy="2.6" r="0.6" fill="#d08020"/><circle cx="2.4" cy="5.3" r="0.6" fill="#d08020"/><circle cx="3.1" cy="4.3" r="0.5" fill="#d08020"/><path d="M6.4 4.7 H8.4" stroke="#a0a0a0" stroke-width="0.8"/></g><rect x="2.2" y="10.2" width="7.8" height="2.6" fill="#1a50b0"/><path d="M3 11.5H5 M6.2 11.5H8.4" stroke="#fff" stroke-width="0.9"/><path d="M10 11 H17" stroke="#a8a8a8" stroke-width="0.8"/><rect x="2.7" y="12.8" width="14.2" height="4.9" fill="#fff" stroke="#000" stroke-width="1.1"/><path d="M4 14.7H16.5" stroke="#000" stroke-width="1" stroke-dasharray="1 1"/></svg>
<svg style="position:absolute;left:158px;top:494px;" width="20" height="20" viewBox="0 0 20 20"><g transform="translate(1.6,4)"><ellipse cx="4" cy="3.6" rx="2.8" ry="1.2" fill="#fff"/><path d="M0.4 3.2 L2.3 1.6 H7.6 L9.2 2.8" stroke="#000" stroke-width="1.6" fill="none"/><ellipse cx="3.6" cy="2.8" rx="2" ry="1.3" fill="#000"/><circle cx="3.4" cy="2.6" r="0.8" fill="#22aa44"/><path d="M3.9 0.8V-0.4 M5.9 0.8V-0.4 M7.9 0.8V-0.4" stroke="#a86010" stroke-width="1.1"/><rect x="10.2" y="0.3" width="0.9" height="1.6" fill="#b0b0b0"/><circle cx="0.5" cy="2.5" r="0.6" fill="#d08020"/><circle cx="5" cy="3" r="0.6" fill="#d08020"/><circle cx="9.4" cy="2.6" r="0.6" fill="#d08020"/><circle cx="2.4" cy="5.3" r="0.6" fill="#d08020"/><circle cx="3.1" cy="4.3" r="0.5" fill="#d08020"/><path d="M6.4 4.7 H8.4" stroke="#a0a0a0" stroke-width="0.8"/></g><path d="M9.8 11.8 L12.6 9 L15.4 11.8" stroke="#000" stroke-width="1.2" fill="none"/><rect x="10" y="12.8" width="5" height="2" fill="#1a50b0"/><rect x="10" y="15.5" width="5" height="2.2" fill="#000"/></svg>
<svg style="position:absolute;left:182px;top:497px;" width="17" height="16" viewBox="0 0 17 16"><path d="M1.2 1.3H12.6L9 5.2V7.3H5V5.2Z" fill="#fff" stroke="#000" stroke-width="1.2" stroke-linejoin="round"/><path d="M1.2 1.3H12.6" stroke="#000" stroke-width="1.6"/><path d="M6.5 2.6H8.8 M7.3 3.6H8.3" stroke="#d08a20" stroke-width="0.9"/><text x="0.3" y="14.3" font-family="Liberation Sans" font-size="7.2" fill="#1a50b0" letter-spacing="0.3">123</text><path d="M14.4 8.2V12.4 M14.4 13.6V15" stroke="#000" stroke-width="1.5"/></svg>
<svg style="position:absolute;left:212px;top:495px;" width="18" height="18" viewBox="0 0 18 18"><rect x="1.5" y="1" width="11" height="15" fill="#fafafa" stroke="#c8c8c8" stroke-width="0.8"/><path d="M12 1.5L5 14" stroke="#f0a020" stroke-width="3"/><path d="M12.5 1L11 1" stroke="#e06010" stroke-width="1"/><path d="M5.5 13L4.5 15.5L6.5 14" fill="#e0a070"/><ellipse cx="14" cy="11" rx="2" ry="1.5" fill="#c8c8c8" opacity="0.5"/></svg>
<svg style="position:absolute;left:245px;top:497px;" width="15" height="15" viewBox="0 0 15 15"><rect x="0.5" y="0.5" width="13.5" height="13.5" rx="1" fill="#1e2460"/><rect x="2.5" y="1" width="10" height="5" fill="#f4f4ff"/><circle cx="4" cy="2.2" r="1" fill="#1e3a90"/><rect x="3" y="8" width="9" height="5.5" fill="#c0c0e0"/></svg>
<svg style="position:absolute;left:267px;top:496px;" width="16" height="16" viewBox="0 0 16 16"><rect x="0.5" y="1.5" width="13.5" height="13.5" rx="1" fill="#1e2460"/><rect x="2.5" y="2" width="10" height="5" fill="#f4f4ff"/><circle cx="4" cy="3.2" r="1" fill="#1e3a90"/><rect x="3" y="9" width="9" height="5.5" fill="#c0c0e0"/><path d="M14 1L7 13.5" stroke="#f0a020" stroke-width="2.6"/><path d="M7.3 13L6.5 15L8 14" fill="#e0a070"/></svg>
<svg style="position:absolute;left:299px;top:496px;" width="14" height="17" viewBox="0 0 14 17"><path d="M8 0.5 L7 9.5 M13.5 2 L8.5 9" stroke="#8890b0" stroke-width="1.3" stroke-dasharray="1 1"/><path d="M0.8 9.5 L4 6.3 L7.2 9.5 L4 12.7 Z M5.8 12.3 L9 9.1 L12.2 12.3 L9 15.5 Z" fill="none" stroke="#c09850" stroke-width="1.3" stroke-dasharray="1 1"/></svg>
<svg style="position:absolute;left:321px;top:496px;" width="17" height="16" viewBox="0 0 17 16"><path d="M0 0H7L10 3V11H0Z" fill="url(#dl)"/><path d="M6 5H13L16 8V16H6Z" fill="url(#dl)"/></svg>
<svg style="position:absolute;left:344px;top:496px;" width="17" height="16" viewBox="0 0 17 16"><rect x="0.5" y="1" width="12.5" height="13.5" rx="1" fill="#f0b040" stroke="#c07010" stroke-width="0.8"/><rect x="1.5" y="2.5" width="3" height="10" fill="#f8d080" opacity="0.7"/><rect x="4" y="0" width="5.5" height="3" rx="1" fill="#5070a0"/><path d="M8 5.5H13L15.5 8V16H8Z" fill="#a8c8f8" stroke="#3a70d0" stroke-width="0.9"/></svg>
<svg style="position:absolute;left:374px;top:498px;" width="18" height="12" viewBox="0 0 18 12"><path d="M0.5 5.5L5 0.5L9.5 5.5H7Q8 9 16.5 6Q14 11 8 11Q4 10.5 4.5 5.5Z" fill="#1d62ee"/><path d="M3 4L5 2" stroke="#9ab8f8" stroke-width="1"/></svg>
<svg style="position:absolute;left:397px;top:498px;" width="18" height="12" viewBox="0 0 18 12"><path d="M1.2 5.5 Q4.5 0.3 8.5 1.8 Q11 2.8 12.5 5.5" stroke="url(#db)" stroke-width="2.4" fill="none"/><path d="M8.3 5.8 H16.7 L12.5 11 Z" fill="url(#db)"/></svg>
<div style="left:1px;top:24px;width:1px;height:697px;background:#fbfbfb"></div>
<div style="left:1022px;top:24px;width:1px;height:697px;background:#fbfbfb"></div>
<div style="left:0px;top:24px;width:1px;height:698px;background:#6d716d"></div>
<div style="left:1023px;top:24px;width:1px;height:698px;background:#6d716d"></div>
</div></body></html>
